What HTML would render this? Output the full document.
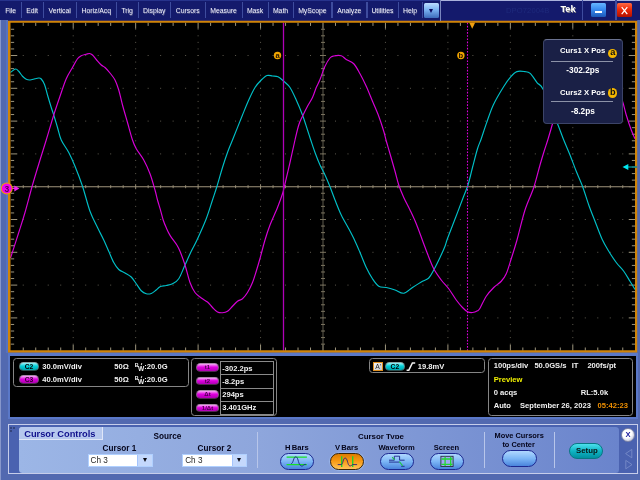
<!DOCTYPE html>
<html lang="en">
<head>
<meta charset="utf-8">
<title>Tek DPO72004B - Cursor Controls</title>
<style>
html,body{margin:0;padding:0;}
body{width:640px;height:480px;overflow:hidden;background:#5269b0;font-family:"Liberation Sans",sans-serif;position:relative;}
.abs{position:absolute;}
#menubar{left:0;top:0;width:640px;height:19.8px;background:#141a6c;}
#menubar .topl{left:0;top:0;width:441px;height:1px;background:#27338c;}
#menubar .topr{left:440.5px;top:0;width:200px;height:1px;background:#aab2dc;}
.mi{position:absolute;top:0;height:20px;line-height:21.2px;font-size:6.8px;color:#f4f4ff;text-align:center;white-space:nowrap;text-shadow:0.5px 0.5px 0 #555a8a;}
.msep{position:absolute;top:2px;width:1.4px;height:16px;background:#3e4c9e;}
.b{font-weight:bold;font-size:7.6px;color:#f2f2f2;white-space:nowrap;position:absolute;line-height:9px;}
.box{position:absolute;border:1px solid #858585;border-radius:3.5px;box-sizing:border-box;}
.badge{position:absolute;box-sizing:border-box;border-radius:4.5px;font-size:6.7px;font-weight:bold;color:#000;text-align:center;line-height:7.2px;border:0.6px solid #8c8c8c;}
.cy{background:linear-gradient(#9af4f8,#00d0d8 45%,#00a4ac);border-color:#88a4a4 #5a8080 #2a5050 #5a8080;}
.mg{background:linear-gradient(#f8aaf8,#e000e0 45%,#b000b4);color:#30002c;border-color:#a888a8 #805a80 #502a50 #805a80;}
.lbl{position:absolute;font-weight:bold;font-size:7.6px;color:#04041a;white-space:nowrap;line-height:9px;}
.pill{position:absolute;box-sizing:border-box;border-radius:8.5px;border:1.1px solid #1c2890;background:linear-gradient(#b0d8ff,#7cb6f6 50%,#4a84dc);}
.dd{position:absolute;box-sizing:border-box;height:13.6px;border:1px solid #b0d0ff;background:#fff;}
.dd .t{position:absolute;left:2px;top:1.4px;font-size:8.2px;line-height:10px;color:#262626;}
.dd .btn{position:absolute;right:0;top:0;width:13.2px;height:11.6px;background:#c4d8fc;border-left:1px solid #a4c4fc;}
.dd .btn:after{content:"";position:absolute;left:4.2px;top:3.6px;border-left:2.6px solid transparent;border-right:2.6px solid transparent;border-top:4.6px solid #0a0a14;}
.vsep{position:absolute;top:431.7px;width:1.3px;height:36.3px;background:#b8c6ea;}
</style>
</head>
<body>
<div id="wrap" style="position:absolute;left:0;top:0;width:640px;height:480px;will-change:transform;">
<svg id="plot" width="640" height="480" viewBox="0 0 640 480" style="position:absolute;left:0;top:0">
<rect x="9" y="21" width="627" height="331" fill="#000"/>
<g fill="#5c584d"><rect x="22.74" y="55.00" width="1" height="1"/><rect x="35.23" y="55.00" width="1" height="1"/><rect x="47.72" y="55.00" width="1" height="1"/><rect x="60.21" y="55.00" width="1" height="1"/><rect x="72.70" y="55.00" width="1" height="1"/><rect x="85.19" y="55.00" width="1" height="1"/><rect x="97.68" y="55.00" width="1" height="1"/><rect x="110.17" y="55.00" width="1" height="1"/><rect x="122.66" y="55.00" width="1" height="1"/><rect x="135.15" y="55.00" width="1" height="1"/><rect x="147.64" y="55.00" width="1" height="1"/><rect x="160.13" y="55.00" width="1" height="1"/><rect x="172.62" y="55.00" width="1" height="1"/><rect x="185.11" y="55.00" width="1" height="1"/><rect x="197.60" y="55.00" width="1" height="1"/><rect x="210.09" y="55.00" width="1" height="1"/><rect x="222.58" y="55.00" width="1" height="1"/><rect x="235.07" y="55.00" width="1" height="1"/><rect x="247.56" y="55.00" width="1" height="1"/><rect x="260.05" y="55.00" width="1" height="1"/><rect x="272.54" y="55.00" width="1" height="1"/><rect x="285.03" y="55.00" width="1" height="1"/><rect x="297.52" y="55.00" width="1" height="1"/><rect x="310.01" y="55.00" width="1" height="1"/><rect x="322.50" y="55.00" width="1" height="1"/><rect x="334.99" y="55.00" width="1" height="1"/><rect x="347.48" y="55.00" width="1" height="1"/><rect x="359.97" y="55.00" width="1" height="1"/><rect x="372.46" y="55.00" width="1" height="1"/><rect x="384.95" y="55.00" width="1" height="1"/><rect x="397.44" y="55.00" width="1" height="1"/><rect x="409.93" y="55.00" width="1" height="1"/><rect x="422.42" y="55.00" width="1" height="1"/><rect x="434.91" y="55.00" width="1" height="1"/><rect x="447.40" y="55.00" width="1" height="1"/><rect x="459.89" y="55.00" width="1" height="1"/><rect x="472.38" y="55.00" width="1" height="1"/><rect x="484.87" y="55.00" width="1" height="1"/><rect x="497.36" y="55.00" width="1" height="1"/><rect x="509.85" y="55.00" width="1" height="1"/><rect x="522.34" y="55.00" width="1" height="1"/><rect x="534.83" y="55.00" width="1" height="1"/><rect x="547.32" y="55.00" width="1" height="1"/><rect x="559.81" y="55.00" width="1" height="1"/><rect x="572.30" y="55.00" width="1" height="1"/><rect x="584.79" y="55.00" width="1" height="1"/><rect x="597.28" y="55.00" width="1" height="1"/><rect x="609.77" y="55.00" width="1" height="1"/><rect x="622.26" y="55.00" width="1" height="1"/><rect x="22.74" y="87.80" width="1" height="1"/><rect x="35.23" y="87.80" width="1" height="1"/><rect x="47.72" y="87.80" width="1" height="1"/><rect x="60.21" y="87.80" width="1" height="1"/><rect x="72.70" y="87.80" width="1" height="1"/><rect x="85.19" y="87.80" width="1" height="1"/><rect x="97.68" y="87.80" width="1" height="1"/><rect x="110.17" y="87.80" width="1" height="1"/><rect x="122.66" y="87.80" width="1" height="1"/><rect x="135.15" y="87.80" width="1" height="1"/><rect x="147.64" y="87.80" width="1" height="1"/><rect x="160.13" y="87.80" width="1" height="1"/><rect x="172.62" y="87.80" width="1" height="1"/><rect x="185.11" y="87.80" width="1" height="1"/><rect x="197.60" y="87.80" width="1" height="1"/><rect x="210.09" y="87.80" width="1" height="1"/><rect x="222.58" y="87.80" width="1" height="1"/><rect x="235.07" y="87.80" width="1" height="1"/><rect x="247.56" y="87.80" width="1" height="1"/><rect x="260.05" y="87.80" width="1" height="1"/><rect x="272.54" y="87.80" width="1" height="1"/><rect x="285.03" y="87.80" width="1" height="1"/><rect x="297.52" y="87.80" width="1" height="1"/><rect x="310.01" y="87.80" width="1" height="1"/><rect x="322.50" y="87.80" width="1" height="1"/><rect x="334.99" y="87.80" width="1" height="1"/><rect x="347.48" y="87.80" width="1" height="1"/><rect x="359.97" y="87.80" width="1" height="1"/><rect x="372.46" y="87.80" width="1" height="1"/><rect x="384.95" y="87.80" width="1" height="1"/><rect x="397.44" y="87.80" width="1" height="1"/><rect x="409.93" y="87.80" width="1" height="1"/><rect x="422.42" y="87.80" width="1" height="1"/><rect x="434.91" y="87.80" width="1" height="1"/><rect x="447.40" y="87.80" width="1" height="1"/><rect x="459.89" y="87.80" width="1" height="1"/><rect x="472.38" y="87.80" width="1" height="1"/><rect x="484.87" y="87.80" width="1" height="1"/><rect x="497.36" y="87.80" width="1" height="1"/><rect x="509.85" y="87.80" width="1" height="1"/><rect x="522.34" y="87.80" width="1" height="1"/><rect x="534.83" y="87.80" width="1" height="1"/><rect x="547.32" y="87.80" width="1" height="1"/><rect x="559.81" y="87.80" width="1" height="1"/><rect x="572.30" y="87.80" width="1" height="1"/><rect x="584.79" y="87.80" width="1" height="1"/><rect x="597.28" y="87.80" width="1" height="1"/><rect x="609.77" y="87.80" width="1" height="1"/><rect x="622.26" y="87.80" width="1" height="1"/><rect x="22.74" y="120.60" width="1" height="1"/><rect x="35.23" y="120.60" width="1" height="1"/><rect x="47.72" y="120.60" width="1" height="1"/><rect x="60.21" y="120.60" width="1" height="1"/><rect x="72.70" y="120.60" width="1" height="1"/><rect x="85.19" y="120.60" width="1" height="1"/><rect x="97.68" y="120.60" width="1" height="1"/><rect x="110.17" y="120.60" width="1" height="1"/><rect x="122.66" y="120.60" width="1" height="1"/><rect x="135.15" y="120.60" width="1" height="1"/><rect x="147.64" y="120.60" width="1" height="1"/><rect x="160.13" y="120.60" width="1" height="1"/><rect x="172.62" y="120.60" width="1" height="1"/><rect x="185.11" y="120.60" width="1" height="1"/><rect x="197.60" y="120.60" width="1" height="1"/><rect x="210.09" y="120.60" width="1" height="1"/><rect x="222.58" y="120.60" width="1" height="1"/><rect x="235.07" y="120.60" width="1" height="1"/><rect x="247.56" y="120.60" width="1" height="1"/><rect x="260.05" y="120.60" width="1" height="1"/><rect x="272.54" y="120.60" width="1" height="1"/><rect x="285.03" y="120.60" width="1" height="1"/><rect x="297.52" y="120.60" width="1" height="1"/><rect x="310.01" y="120.60" width="1" height="1"/><rect x="322.50" y="120.60" width="1" height="1"/><rect x="334.99" y="120.60" width="1" height="1"/><rect x="347.48" y="120.60" width="1" height="1"/><rect x="359.97" y="120.60" width="1" height="1"/><rect x="372.46" y="120.60" width="1" height="1"/><rect x="384.95" y="120.60" width="1" height="1"/><rect x="397.44" y="120.60" width="1" height="1"/><rect x="409.93" y="120.60" width="1" height="1"/><rect x="422.42" y="120.60" width="1" height="1"/><rect x="434.91" y="120.60" width="1" height="1"/><rect x="447.40" y="120.60" width="1" height="1"/><rect x="459.89" y="120.60" width="1" height="1"/><rect x="472.38" y="120.60" width="1" height="1"/><rect x="484.87" y="120.60" width="1" height="1"/><rect x="497.36" y="120.60" width="1" height="1"/><rect x="509.85" y="120.60" width="1" height="1"/><rect x="522.34" y="120.60" width="1" height="1"/><rect x="534.83" y="120.60" width="1" height="1"/><rect x="547.32" y="120.60" width="1" height="1"/><rect x="559.81" y="120.60" width="1" height="1"/><rect x="572.30" y="120.60" width="1" height="1"/><rect x="584.79" y="120.60" width="1" height="1"/><rect x="597.28" y="120.60" width="1" height="1"/><rect x="609.77" y="120.60" width="1" height="1"/><rect x="622.26" y="120.60" width="1" height="1"/><rect x="22.74" y="153.40" width="1" height="1"/><rect x="35.23" y="153.40" width="1" height="1"/><rect x="47.72" y="153.40" width="1" height="1"/><rect x="60.21" y="153.40" width="1" height="1"/><rect x="72.70" y="153.40" width="1" height="1"/><rect x="85.19" y="153.40" width="1" height="1"/><rect x="97.68" y="153.40" width="1" height="1"/><rect x="110.17" y="153.40" width="1" height="1"/><rect x="122.66" y="153.40" width="1" height="1"/><rect x="135.15" y="153.40" width="1" height="1"/><rect x="147.64" y="153.40" width="1" height="1"/><rect x="160.13" y="153.40" width="1" height="1"/><rect x="172.62" y="153.40" width="1" height="1"/><rect x="185.11" y="153.40" width="1" height="1"/><rect x="197.60" y="153.40" width="1" height="1"/><rect x="210.09" y="153.40" width="1" height="1"/><rect x="222.58" y="153.40" width="1" height="1"/><rect x="235.07" y="153.40" width="1" height="1"/><rect x="247.56" y="153.40" width="1" height="1"/><rect x="260.05" y="153.40" width="1" height="1"/><rect x="272.54" y="153.40" width="1" height="1"/><rect x="285.03" y="153.40" width="1" height="1"/><rect x="297.52" y="153.40" width="1" height="1"/><rect x="310.01" y="153.40" width="1" height="1"/><rect x="322.50" y="153.40" width="1" height="1"/><rect x="334.99" y="153.40" width="1" height="1"/><rect x="347.48" y="153.40" width="1" height="1"/><rect x="359.97" y="153.40" width="1" height="1"/><rect x="372.46" y="153.40" width="1" height="1"/><rect x="384.95" y="153.40" width="1" height="1"/><rect x="397.44" y="153.40" width="1" height="1"/><rect x="409.93" y="153.40" width="1" height="1"/><rect x="422.42" y="153.40" width="1" height="1"/><rect x="434.91" y="153.40" width="1" height="1"/><rect x="447.40" y="153.40" width="1" height="1"/><rect x="459.89" y="153.40" width="1" height="1"/><rect x="472.38" y="153.40" width="1" height="1"/><rect x="484.87" y="153.40" width="1" height="1"/><rect x="497.36" y="153.40" width="1" height="1"/><rect x="509.85" y="153.40" width="1" height="1"/><rect x="522.34" y="153.40" width="1" height="1"/><rect x="534.83" y="153.40" width="1" height="1"/><rect x="547.32" y="153.40" width="1" height="1"/><rect x="559.81" y="153.40" width="1" height="1"/><rect x="572.30" y="153.40" width="1" height="1"/><rect x="584.79" y="153.40" width="1" height="1"/><rect x="597.28" y="153.40" width="1" height="1"/><rect x="609.77" y="153.40" width="1" height="1"/><rect x="622.26" y="153.40" width="1" height="1"/><rect x="22.74" y="219.00" width="1" height="1"/><rect x="35.23" y="219.00" width="1" height="1"/><rect x="47.72" y="219.00" width="1" height="1"/><rect x="60.21" y="219.00" width="1" height="1"/><rect x="72.70" y="219.00" width="1" height="1"/><rect x="85.19" y="219.00" width="1" height="1"/><rect x="97.68" y="219.00" width="1" height="1"/><rect x="110.17" y="219.00" width="1" height="1"/><rect x="122.66" y="219.00" width="1" height="1"/><rect x="135.15" y="219.00" width="1" height="1"/><rect x="147.64" y="219.00" width="1" height="1"/><rect x="160.13" y="219.00" width="1" height="1"/><rect x="172.62" y="219.00" width="1" height="1"/><rect x="185.11" y="219.00" width="1" height="1"/><rect x="197.60" y="219.00" width="1" height="1"/><rect x="210.09" y="219.00" width="1" height="1"/><rect x="222.58" y="219.00" width="1" height="1"/><rect x="235.07" y="219.00" width="1" height="1"/><rect x="247.56" y="219.00" width="1" height="1"/><rect x="260.05" y="219.00" width="1" height="1"/><rect x="272.54" y="219.00" width="1" height="1"/><rect x="285.03" y="219.00" width="1" height="1"/><rect x="297.52" y="219.00" width="1" height="1"/><rect x="310.01" y="219.00" width="1" height="1"/><rect x="322.50" y="219.00" width="1" height="1"/><rect x="334.99" y="219.00" width="1" height="1"/><rect x="347.48" y="219.00" width="1" height="1"/><rect x="359.97" y="219.00" width="1" height="1"/><rect x="372.46" y="219.00" width="1" height="1"/><rect x="384.95" y="219.00" width="1" height="1"/><rect x="397.44" y="219.00" width="1" height="1"/><rect x="409.93" y="219.00" width="1" height="1"/><rect x="422.42" y="219.00" width="1" height="1"/><rect x="434.91" y="219.00" width="1" height="1"/><rect x="447.40" y="219.00" width="1" height="1"/><rect x="459.89" y="219.00" width="1" height="1"/><rect x="472.38" y="219.00" width="1" height="1"/><rect x="484.87" y="219.00" width="1" height="1"/><rect x="497.36" y="219.00" width="1" height="1"/><rect x="509.85" y="219.00" width="1" height="1"/><rect x="522.34" y="219.00" width="1" height="1"/><rect x="534.83" y="219.00" width="1" height="1"/><rect x="547.32" y="219.00" width="1" height="1"/><rect x="559.81" y="219.00" width="1" height="1"/><rect x="572.30" y="219.00" width="1" height="1"/><rect x="584.79" y="219.00" width="1" height="1"/><rect x="597.28" y="219.00" width="1" height="1"/><rect x="609.77" y="219.00" width="1" height="1"/><rect x="622.26" y="219.00" width="1" height="1"/><rect x="22.74" y="251.80" width="1" height="1"/><rect x="35.23" y="251.80" width="1" height="1"/><rect x="47.72" y="251.80" width="1" height="1"/><rect x="60.21" y="251.80" width="1" height="1"/><rect x="72.70" y="251.80" width="1" height="1"/><rect x="85.19" y="251.80" width="1" height="1"/><rect x="97.68" y="251.80" width="1" height="1"/><rect x="110.17" y="251.80" width="1" height="1"/><rect x="122.66" y="251.80" width="1" height="1"/><rect x="135.15" y="251.80" width="1" height="1"/><rect x="147.64" y="251.80" width="1" height="1"/><rect x="160.13" y="251.80" width="1" height="1"/><rect x="172.62" y="251.80" width="1" height="1"/><rect x="185.11" y="251.80" width="1" height="1"/><rect x="197.60" y="251.80" width="1" height="1"/><rect x="210.09" y="251.80" width="1" height="1"/><rect x="222.58" y="251.80" width="1" height="1"/><rect x="235.07" y="251.80" width="1" height="1"/><rect x="247.56" y="251.80" width="1" height="1"/><rect x="260.05" y="251.80" width="1" height="1"/><rect x="272.54" y="251.80" width="1" height="1"/><rect x="285.03" y="251.80" width="1" height="1"/><rect x="297.52" y="251.80" width="1" height="1"/><rect x="310.01" y="251.80" width="1" height="1"/><rect x="322.50" y="251.80" width="1" height="1"/><rect x="334.99" y="251.80" width="1" height="1"/><rect x="347.48" y="251.80" width="1" height="1"/><rect x="359.97" y="251.80" width="1" height="1"/><rect x="372.46" y="251.80" width="1" height="1"/><rect x="384.95" y="251.80" width="1" height="1"/><rect x="397.44" y="251.80" width="1" height="1"/><rect x="409.93" y="251.80" width="1" height="1"/><rect x="422.42" y="251.80" width="1" height="1"/><rect x="434.91" y="251.80" width="1" height="1"/><rect x="447.40" y="251.80" width="1" height="1"/><rect x="459.89" y="251.80" width="1" height="1"/><rect x="472.38" y="251.80" width="1" height="1"/><rect x="484.87" y="251.80" width="1" height="1"/><rect x="497.36" y="251.80" width="1" height="1"/><rect x="509.85" y="251.80" width="1" height="1"/><rect x="522.34" y="251.80" width="1" height="1"/><rect x="534.83" y="251.80" width="1" height="1"/><rect x="547.32" y="251.80" width="1" height="1"/><rect x="559.81" y="251.80" width="1" height="1"/><rect x="572.30" y="251.80" width="1" height="1"/><rect x="584.79" y="251.80" width="1" height="1"/><rect x="597.28" y="251.80" width="1" height="1"/><rect x="609.77" y="251.80" width="1" height="1"/><rect x="622.26" y="251.80" width="1" height="1"/><rect x="22.74" y="284.60" width="1" height="1"/><rect x="35.23" y="284.60" width="1" height="1"/><rect x="47.72" y="284.60" width="1" height="1"/><rect x="60.21" y="284.60" width="1" height="1"/><rect x="72.70" y="284.60" width="1" height="1"/><rect x="85.19" y="284.60" width="1" height="1"/><rect x="97.68" y="284.60" width="1" height="1"/><rect x="110.17" y="284.60" width="1" height="1"/><rect x="122.66" y="284.60" width="1" height="1"/><rect x="135.15" y="284.60" width="1" height="1"/><rect x="147.64" y="284.60" width="1" height="1"/><rect x="160.13" y="284.60" width="1" height="1"/><rect x="172.62" y="284.60" width="1" height="1"/><rect x="185.11" y="284.60" width="1" height="1"/><rect x="197.60" y="284.60" width="1" height="1"/><rect x="210.09" y="284.60" width="1" height="1"/><rect x="222.58" y="284.60" width="1" height="1"/><rect x="235.07" y="284.60" width="1" height="1"/><rect x="247.56" y="284.60" width="1" height="1"/><rect x="260.05" y="284.60" width="1" height="1"/><rect x="272.54" y="284.60" width="1" height="1"/><rect x="285.03" y="284.60" width="1" height="1"/><rect x="297.52" y="284.60" width="1" height="1"/><rect x="310.01" y="284.60" width="1" height="1"/><rect x="322.50" y="284.60" width="1" height="1"/><rect x="334.99" y="284.60" width="1" height="1"/><rect x="347.48" y="284.60" width="1" height="1"/><rect x="359.97" y="284.60" width="1" height="1"/><rect x="372.46" y="284.60" width="1" height="1"/><rect x="384.95" y="284.60" width="1" height="1"/><rect x="397.44" y="284.60" width="1" height="1"/><rect x="409.93" y="284.60" width="1" height="1"/><rect x="422.42" y="284.60" width="1" height="1"/><rect x="434.91" y="284.60" width="1" height="1"/><rect x="447.40" y="284.60" width="1" height="1"/><rect x="459.89" y="284.60" width="1" height="1"/><rect x="472.38" y="284.60" width="1" height="1"/><rect x="484.87" y="284.60" width="1" height="1"/><rect x="497.36" y="284.60" width="1" height="1"/><rect x="509.85" y="284.60" width="1" height="1"/><rect x="522.34" y="284.60" width="1" height="1"/><rect x="534.83" y="284.60" width="1" height="1"/><rect x="547.32" y="284.60" width="1" height="1"/><rect x="559.81" y="284.60" width="1" height="1"/><rect x="572.30" y="284.60" width="1" height="1"/><rect x="584.79" y="284.60" width="1" height="1"/><rect x="597.28" y="284.60" width="1" height="1"/><rect x="609.77" y="284.60" width="1" height="1"/><rect x="622.26" y="284.60" width="1" height="1"/><rect x="22.74" y="317.40" width="1" height="1"/><rect x="35.23" y="317.40" width="1" height="1"/><rect x="47.72" y="317.40" width="1" height="1"/><rect x="60.21" y="317.40" width="1" height="1"/><rect x="72.70" y="317.40" width="1" height="1"/><rect x="85.19" y="317.40" width="1" height="1"/><rect x="97.68" y="317.40" width="1" height="1"/><rect x="110.17" y="317.40" width="1" height="1"/><rect x="122.66" y="317.40" width="1" height="1"/><rect x="135.15" y="317.40" width="1" height="1"/><rect x="147.64" y="317.40" width="1" height="1"/><rect x="160.13" y="317.40" width="1" height="1"/><rect x="172.62" y="317.40" width="1" height="1"/><rect x="185.11" y="317.40" width="1" height="1"/><rect x="197.60" y="317.40" width="1" height="1"/><rect x="210.09" y="317.40" width="1" height="1"/><rect x="222.58" y="317.40" width="1" height="1"/><rect x="235.07" y="317.40" width="1" height="1"/><rect x="247.56" y="317.40" width="1" height="1"/><rect x="260.05" y="317.40" width="1" height="1"/><rect x="272.54" y="317.40" width="1" height="1"/><rect x="285.03" y="317.40" width="1" height="1"/><rect x="297.52" y="317.40" width="1" height="1"/><rect x="310.01" y="317.40" width="1" height="1"/><rect x="322.50" y="317.40" width="1" height="1"/><rect x="334.99" y="317.40" width="1" height="1"/><rect x="347.48" y="317.40" width="1" height="1"/><rect x="359.97" y="317.40" width="1" height="1"/><rect x="372.46" y="317.40" width="1" height="1"/><rect x="384.95" y="317.40" width="1" height="1"/><rect x="397.44" y="317.40" width="1" height="1"/><rect x="409.93" y="317.40" width="1" height="1"/><rect x="422.42" y="317.40" width="1" height="1"/><rect x="434.91" y="317.40" width="1" height="1"/><rect x="447.40" y="317.40" width="1" height="1"/><rect x="459.89" y="317.40" width="1" height="1"/><rect x="472.38" y="317.40" width="1" height="1"/><rect x="484.87" y="317.40" width="1" height="1"/><rect x="497.36" y="317.40" width="1" height="1"/><rect x="509.85" y="317.40" width="1" height="1"/><rect x="522.34" y="317.40" width="1" height="1"/><rect x="534.83" y="317.40" width="1" height="1"/><rect x="547.32" y="317.40" width="1" height="1"/><rect x="559.81" y="317.40" width="1" height="1"/><rect x="572.30" y="317.40" width="1" height="1"/><rect x="584.79" y="317.40" width="1" height="1"/><rect x="597.28" y="317.40" width="1" height="1"/><rect x="609.77" y="317.40" width="1" height="1"/><rect x="622.26" y="317.40" width="1" height="1"/><rect x="72.70" y="28.76" width="1" height="1"/><rect x="72.70" y="35.32" width="1" height="1"/><rect x="72.70" y="41.88" width="1" height="1"/><rect x="72.70" y="48.44" width="1" height="1"/><rect x="72.70" y="55.00" width="1" height="1"/><rect x="72.70" y="61.56" width="1" height="1"/><rect x="72.70" y="68.12" width="1" height="1"/><rect x="72.70" y="74.68" width="1" height="1"/><rect x="72.70" y="81.24" width="1" height="1"/><rect x="72.70" y="87.80" width="1" height="1"/><rect x="72.70" y="94.36" width="1" height="1"/><rect x="72.70" y="100.92" width="1" height="1"/><rect x="72.70" y="107.48" width="1" height="1"/><rect x="72.70" y="114.04" width="1" height="1"/><rect x="72.70" y="120.60" width="1" height="1"/><rect x="72.70" y="127.16" width="1" height="1"/><rect x="72.70" y="133.72" width="1" height="1"/><rect x="72.70" y="140.28" width="1" height="1"/><rect x="72.70" y="146.84" width="1" height="1"/><rect x="72.70" y="153.40" width="1" height="1"/><rect x="72.70" y="159.96" width="1" height="1"/><rect x="72.70" y="166.52" width="1" height="1"/><rect x="72.70" y="173.08" width="1" height="1"/><rect x="72.70" y="179.64" width="1" height="1"/><rect x="72.70" y="186.20" width="1" height="1"/><rect x="72.70" y="192.76" width="1" height="1"/><rect x="72.70" y="199.32" width="1" height="1"/><rect x="72.70" y="205.88" width="1" height="1"/><rect x="72.70" y="212.44" width="1" height="1"/><rect x="72.70" y="219.00" width="1" height="1"/><rect x="72.70" y="225.56" width="1" height="1"/><rect x="72.70" y="232.12" width="1" height="1"/><rect x="72.70" y="238.68" width="1" height="1"/><rect x="72.70" y="245.24" width="1" height="1"/><rect x="72.70" y="251.80" width="1" height="1"/><rect x="72.70" y="258.36" width="1" height="1"/><rect x="72.70" y="264.92" width="1" height="1"/><rect x="72.70" y="271.48" width="1" height="1"/><rect x="72.70" y="278.04" width="1" height="1"/><rect x="72.70" y="284.60" width="1" height="1"/><rect x="72.70" y="291.16" width="1" height="1"/><rect x="72.70" y="297.72" width="1" height="1"/><rect x="72.70" y="304.28" width="1" height="1"/><rect x="72.70" y="310.84" width="1" height="1"/><rect x="72.70" y="317.40" width="1" height="1"/><rect x="72.70" y="323.96" width="1" height="1"/><rect x="72.70" y="330.52" width="1" height="1"/><rect x="72.70" y="337.08" width="1" height="1"/><rect x="72.70" y="343.64" width="1" height="1"/><rect x="135.15" y="28.76" width="1" height="1"/><rect x="135.15" y="35.32" width="1" height="1"/><rect x="135.15" y="41.88" width="1" height="1"/><rect x="135.15" y="48.44" width="1" height="1"/><rect x="135.15" y="55.00" width="1" height="1"/><rect x="135.15" y="61.56" width="1" height="1"/><rect x="135.15" y="68.12" width="1" height="1"/><rect x="135.15" y="74.68" width="1" height="1"/><rect x="135.15" y="81.24" width="1" height="1"/><rect x="135.15" y="87.80" width="1" height="1"/><rect x="135.15" y="94.36" width="1" height="1"/><rect x="135.15" y="100.92" width="1" height="1"/><rect x="135.15" y="107.48" width="1" height="1"/><rect x="135.15" y="114.04" width="1" height="1"/><rect x="135.15" y="120.60" width="1" height="1"/><rect x="135.15" y="127.16" width="1" height="1"/><rect x="135.15" y="133.72" width="1" height="1"/><rect x="135.15" y="140.28" width="1" height="1"/><rect x="135.15" y="146.84" width="1" height="1"/><rect x="135.15" y="153.40" width="1" height="1"/><rect x="135.15" y="159.96" width="1" height="1"/><rect x="135.15" y="166.52" width="1" height="1"/><rect x="135.15" y="173.08" width="1" height="1"/><rect x="135.15" y="179.64" width="1" height="1"/><rect x="135.15" y="186.20" width="1" height="1"/><rect x="135.15" y="192.76" width="1" height="1"/><rect x="135.15" y="199.32" width="1" height="1"/><rect x="135.15" y="205.88" width="1" height="1"/><rect x="135.15" y="212.44" width="1" height="1"/><rect x="135.15" y="219.00" width="1" height="1"/><rect x="135.15" y="225.56" width="1" height="1"/><rect x="135.15" y="232.12" width="1" height="1"/><rect x="135.15" y="238.68" width="1" height="1"/><rect x="135.15" y="245.24" width="1" height="1"/><rect x="135.15" y="251.80" width="1" height="1"/><rect x="135.15" y="258.36" width="1" height="1"/><rect x="135.15" y="264.92" width="1" height="1"/><rect x="135.15" y="271.48" width="1" height="1"/><rect x="135.15" y="278.04" width="1" height="1"/><rect x="135.15" y="284.60" width="1" height="1"/><rect x="135.15" y="291.16" width="1" height="1"/><rect x="135.15" y="297.72" width="1" height="1"/><rect x="135.15" y="304.28" width="1" height="1"/><rect x="135.15" y="310.84" width="1" height="1"/><rect x="135.15" y="317.40" width="1" height="1"/><rect x="135.15" y="323.96" width="1" height="1"/><rect x="135.15" y="330.52" width="1" height="1"/><rect x="135.15" y="337.08" width="1" height="1"/><rect x="135.15" y="343.64" width="1" height="1"/><rect x="197.60" y="28.76" width="1" height="1"/><rect x="197.60" y="35.32" width="1" height="1"/><rect x="197.60" y="41.88" width="1" height="1"/><rect x="197.60" y="48.44" width="1" height="1"/><rect x="197.60" y="55.00" width="1" height="1"/><rect x="197.60" y="61.56" width="1" height="1"/><rect x="197.60" y="68.12" width="1" height="1"/><rect x="197.60" y="74.68" width="1" height="1"/><rect x="197.60" y="81.24" width="1" height="1"/><rect x="197.60" y="87.80" width="1" height="1"/><rect x="197.60" y="94.36" width="1" height="1"/><rect x="197.60" y="100.92" width="1" height="1"/><rect x="197.60" y="107.48" width="1" height="1"/><rect x="197.60" y="114.04" width="1" height="1"/><rect x="197.60" y="120.60" width="1" height="1"/><rect x="197.60" y="127.16" width="1" height="1"/><rect x="197.60" y="133.72" width="1" height="1"/><rect x="197.60" y="140.28" width="1" height="1"/><rect x="197.60" y="146.84" width="1" height="1"/><rect x="197.60" y="153.40" width="1" height="1"/><rect x="197.60" y="159.96" width="1" height="1"/><rect x="197.60" y="166.52" width="1" height="1"/><rect x="197.60" y="173.08" width="1" height="1"/><rect x="197.60" y="179.64" width="1" height="1"/><rect x="197.60" y="186.20" width="1" height="1"/><rect x="197.60" y="192.76" width="1" height="1"/><rect x="197.60" y="199.32" width="1" height="1"/><rect x="197.60" y="205.88" width="1" height="1"/><rect x="197.60" y="212.44" width="1" height="1"/><rect x="197.60" y="219.00" width="1" height="1"/><rect x="197.60" y="225.56" width="1" height="1"/><rect x="197.60" y="232.12" width="1" height="1"/><rect x="197.60" y="238.68" width="1" height="1"/><rect x="197.60" y="245.24" width="1" height="1"/><rect x="197.60" y="251.80" width="1" height="1"/><rect x="197.60" y="258.36" width="1" height="1"/><rect x="197.60" y="264.92" width="1" height="1"/><rect x="197.60" y="271.48" width="1" height="1"/><rect x="197.60" y="278.04" width="1" height="1"/><rect x="197.60" y="284.60" width="1" height="1"/><rect x="197.60" y="291.16" width="1" height="1"/><rect x="197.60" y="297.72" width="1" height="1"/><rect x="197.60" y="304.28" width="1" height="1"/><rect x="197.60" y="310.84" width="1" height="1"/><rect x="197.60" y="317.40" width="1" height="1"/><rect x="197.60" y="323.96" width="1" height="1"/><rect x="197.60" y="330.52" width="1" height="1"/><rect x="197.60" y="337.08" width="1" height="1"/><rect x="197.60" y="343.64" width="1" height="1"/><rect x="260.05" y="28.76" width="1" height="1"/><rect x="260.05" y="35.32" width="1" height="1"/><rect x="260.05" y="41.88" width="1" height="1"/><rect x="260.05" y="48.44" width="1" height="1"/><rect x="260.05" y="55.00" width="1" height="1"/><rect x="260.05" y="61.56" width="1" height="1"/><rect x="260.05" y="68.12" width="1" height="1"/><rect x="260.05" y="74.68" width="1" height="1"/><rect x="260.05" y="81.24" width="1" height="1"/><rect x="260.05" y="87.80" width="1" height="1"/><rect x="260.05" y="94.36" width="1" height="1"/><rect x="260.05" y="100.92" width="1" height="1"/><rect x="260.05" y="107.48" width="1" height="1"/><rect x="260.05" y="114.04" width="1" height="1"/><rect x="260.05" y="120.60" width="1" height="1"/><rect x="260.05" y="127.16" width="1" height="1"/><rect x="260.05" y="133.72" width="1" height="1"/><rect x="260.05" y="140.28" width="1" height="1"/><rect x="260.05" y="146.84" width="1" height="1"/><rect x="260.05" y="153.40" width="1" height="1"/><rect x="260.05" y="159.96" width="1" height="1"/><rect x="260.05" y="166.52" width="1" height="1"/><rect x="260.05" y="173.08" width="1" height="1"/><rect x="260.05" y="179.64" width="1" height="1"/><rect x="260.05" y="186.20" width="1" height="1"/><rect x="260.05" y="192.76" width="1" height="1"/><rect x="260.05" y="199.32" width="1" height="1"/><rect x="260.05" y="205.88" width="1" height="1"/><rect x="260.05" y="212.44" width="1" height="1"/><rect x="260.05" y="219.00" width="1" height="1"/><rect x="260.05" y="225.56" width="1" height="1"/><rect x="260.05" y="232.12" width="1" height="1"/><rect x="260.05" y="238.68" width="1" height="1"/><rect x="260.05" y="245.24" width="1" height="1"/><rect x="260.05" y="251.80" width="1" height="1"/><rect x="260.05" y="258.36" width="1" height="1"/><rect x="260.05" y="264.92" width="1" height="1"/><rect x="260.05" y="271.48" width="1" height="1"/><rect x="260.05" y="278.04" width="1" height="1"/><rect x="260.05" y="284.60" width="1" height="1"/><rect x="260.05" y="291.16" width="1" height="1"/><rect x="260.05" y="297.72" width="1" height="1"/><rect x="260.05" y="304.28" width="1" height="1"/><rect x="260.05" y="310.84" width="1" height="1"/><rect x="260.05" y="317.40" width="1" height="1"/><rect x="260.05" y="323.96" width="1" height="1"/><rect x="260.05" y="330.52" width="1" height="1"/><rect x="260.05" y="337.08" width="1" height="1"/><rect x="260.05" y="343.64" width="1" height="1"/><rect x="384.95" y="28.76" width="1" height="1"/><rect x="384.95" y="35.32" width="1" height="1"/><rect x="384.95" y="41.88" width="1" height="1"/><rect x="384.95" y="48.44" width="1" height="1"/><rect x="384.95" y="55.00" width="1" height="1"/><rect x="384.95" y="61.56" width="1" height="1"/><rect x="384.95" y="68.12" width="1" height="1"/><rect x="384.95" y="74.68" width="1" height="1"/><rect x="384.95" y="81.24" width="1" height="1"/><rect x="384.95" y="87.80" width="1" height="1"/><rect x="384.95" y="94.36" width="1" height="1"/><rect x="384.95" y="100.92" width="1" height="1"/><rect x="384.95" y="107.48" width="1" height="1"/><rect x="384.95" y="114.04" width="1" height="1"/><rect x="384.95" y="120.60" width="1" height="1"/><rect x="384.95" y="127.16" width="1" height="1"/><rect x="384.95" y="133.72" width="1" height="1"/><rect x="384.95" y="140.28" width="1" height="1"/><rect x="384.95" y="146.84" width="1" height="1"/><rect x="384.95" y="153.40" width="1" height="1"/><rect x="384.95" y="159.96" width="1" height="1"/><rect x="384.95" y="166.52" width="1" height="1"/><rect x="384.95" y="173.08" width="1" height="1"/><rect x="384.95" y="179.64" width="1" height="1"/><rect x="384.95" y="186.20" width="1" height="1"/><rect x="384.95" y="192.76" width="1" height="1"/><rect x="384.95" y="199.32" width="1" height="1"/><rect x="384.95" y="205.88" width="1" height="1"/><rect x="384.95" y="212.44" width="1" height="1"/><rect x="384.95" y="219.00" width="1" height="1"/><rect x="384.95" y="225.56" width="1" height="1"/><rect x="384.95" y="232.12" width="1" height="1"/><rect x="384.95" y="238.68" width="1" height="1"/><rect x="384.95" y="245.24" width="1" height="1"/><rect x="384.95" y="251.80" width="1" height="1"/><rect x="384.95" y="258.36" width="1" height="1"/><rect x="384.95" y="264.92" width="1" height="1"/><rect x="384.95" y="271.48" width="1" height="1"/><rect x="384.95" y="278.04" width="1" height="1"/><rect x="384.95" y="284.60" width="1" height="1"/><rect x="384.95" y="291.16" width="1" height="1"/><rect x="384.95" y="297.72" width="1" height="1"/><rect x="384.95" y="304.28" width="1" height="1"/><rect x="384.95" y="310.84" width="1" height="1"/><rect x="384.95" y="317.40" width="1" height="1"/><rect x="384.95" y="323.96" width="1" height="1"/><rect x="384.95" y="330.52" width="1" height="1"/><rect x="384.95" y="337.08" width="1" height="1"/><rect x="384.95" y="343.64" width="1" height="1"/><rect x="447.40" y="28.76" width="1" height="1"/><rect x="447.40" y="35.32" width="1" height="1"/><rect x="447.40" y="41.88" width="1" height="1"/><rect x="447.40" y="48.44" width="1" height="1"/><rect x="447.40" y="55.00" width="1" height="1"/><rect x="447.40" y="61.56" width="1" height="1"/><rect x="447.40" y="68.12" width="1" height="1"/><rect x="447.40" y="74.68" width="1" height="1"/><rect x="447.40" y="81.24" width="1" height="1"/><rect x="447.40" y="87.80" width="1" height="1"/><rect x="447.40" y="94.36" width="1" height="1"/><rect x="447.40" y="100.92" width="1" height="1"/><rect x="447.40" y="107.48" width="1" height="1"/><rect x="447.40" y="114.04" width="1" height="1"/><rect x="447.40" y="120.60" width="1" height="1"/><rect x="447.40" y="127.16" width="1" height="1"/><rect x="447.40" y="133.72" width="1" height="1"/><rect x="447.40" y="140.28" width="1" height="1"/><rect x="447.40" y="146.84" width="1" height="1"/><rect x="447.40" y="153.40" width="1" height="1"/><rect x="447.40" y="159.96" width="1" height="1"/><rect x="447.40" y="166.52" width="1" height="1"/><rect x="447.40" y="173.08" width="1" height="1"/><rect x="447.40" y="179.64" width="1" height="1"/><rect x="447.40" y="186.20" width="1" height="1"/><rect x="447.40" y="192.76" width="1" height="1"/><rect x="447.40" y="199.32" width="1" height="1"/><rect x="447.40" y="205.88" width="1" height="1"/><rect x="447.40" y="212.44" width="1" height="1"/><rect x="447.40" y="219.00" width="1" height="1"/><rect x="447.40" y="225.56" width="1" height="1"/><rect x="447.40" y="232.12" width="1" height="1"/><rect x="447.40" y="238.68" width="1" height="1"/><rect x="447.40" y="245.24" width="1" height="1"/><rect x="447.40" y="251.80" width="1" height="1"/><rect x="447.40" y="258.36" width="1" height="1"/><rect x="447.40" y="264.92" width="1" height="1"/><rect x="447.40" y="271.48" width="1" height="1"/><rect x="447.40" y="278.04" width="1" height="1"/><rect x="447.40" y="284.60" width="1" height="1"/><rect x="447.40" y="291.16" width="1" height="1"/><rect x="447.40" y="297.72" width="1" height="1"/><rect x="447.40" y="304.28" width="1" height="1"/><rect x="447.40" y="310.84" width="1" height="1"/><rect x="447.40" y="317.40" width="1" height="1"/><rect x="447.40" y="323.96" width="1" height="1"/><rect x="447.40" y="330.52" width="1" height="1"/><rect x="447.40" y="337.08" width="1" height="1"/><rect x="447.40" y="343.64" width="1" height="1"/><rect x="509.85" y="28.76" width="1" height="1"/><rect x="509.85" y="35.32" width="1" height="1"/><rect x="509.85" y="41.88" width="1" height="1"/><rect x="509.85" y="48.44" width="1" height="1"/><rect x="509.85" y="55.00" width="1" height="1"/><rect x="509.85" y="61.56" width="1" height="1"/><rect x="509.85" y="68.12" width="1" height="1"/><rect x="509.85" y="74.68" width="1" height="1"/><rect x="509.85" y="81.24" width="1" height="1"/><rect x="509.85" y="87.80" width="1" height="1"/><rect x="509.85" y="94.36" width="1" height="1"/><rect x="509.85" y="100.92" width="1" height="1"/><rect x="509.85" y="107.48" width="1" height="1"/><rect x="509.85" y="114.04" width="1" height="1"/><rect x="509.85" y="120.60" width="1" height="1"/><rect x="509.85" y="127.16" width="1" height="1"/><rect x="509.85" y="133.72" width="1" height="1"/><rect x="509.85" y="140.28" width="1" height="1"/><rect x="509.85" y="146.84" width="1" height="1"/><rect x="509.85" y="153.40" width="1" height="1"/><rect x="509.85" y="159.96" width="1" height="1"/><rect x="509.85" y="166.52" width="1" height="1"/><rect x="509.85" y="173.08" width="1" height="1"/><rect x="509.85" y="179.64" width="1" height="1"/><rect x="509.85" y="186.20" width="1" height="1"/><rect x="509.85" y="192.76" width="1" height="1"/><rect x="509.85" y="199.32" width="1" height="1"/><rect x="509.85" y="205.88" width="1" height="1"/><rect x="509.85" y="212.44" width="1" height="1"/><rect x="509.85" y="219.00" width="1" height="1"/><rect x="509.85" y="225.56" width="1" height="1"/><rect x="509.85" y="232.12" width="1" height="1"/><rect x="509.85" y="238.68" width="1" height="1"/><rect x="509.85" y="245.24" width="1" height="1"/><rect x="509.85" y="251.80" width="1" height="1"/><rect x="509.85" y="258.36" width="1" height="1"/><rect x="509.85" y="264.92" width="1" height="1"/><rect x="509.85" y="271.48" width="1" height="1"/><rect x="509.85" y="278.04" width="1" height="1"/><rect x="509.85" y="284.60" width="1" height="1"/><rect x="509.85" y="291.16" width="1" height="1"/><rect x="509.85" y="297.72" width="1" height="1"/><rect x="509.85" y="304.28" width="1" height="1"/><rect x="509.85" y="310.84" width="1" height="1"/><rect x="509.85" y="317.40" width="1" height="1"/><rect x="509.85" y="323.96" width="1" height="1"/><rect x="509.85" y="330.52" width="1" height="1"/><rect x="509.85" y="337.08" width="1" height="1"/><rect x="509.85" y="343.64" width="1" height="1"/><rect x="572.30" y="28.76" width="1" height="1"/><rect x="572.30" y="35.32" width="1" height="1"/><rect x="572.30" y="41.88" width="1" height="1"/><rect x="572.30" y="48.44" width="1" height="1"/><rect x="572.30" y="55.00" width="1" height="1"/><rect x="572.30" y="61.56" width="1" height="1"/><rect x="572.30" y="68.12" width="1" height="1"/><rect x="572.30" y="74.68" width="1" height="1"/><rect x="572.30" y="81.24" width="1" height="1"/><rect x="572.30" y="87.80" width="1" height="1"/><rect x="572.30" y="94.36" width="1" height="1"/><rect x="572.30" y="100.92" width="1" height="1"/><rect x="572.30" y="107.48" width="1" height="1"/><rect x="572.30" y="114.04" width="1" height="1"/><rect x="572.30" y="120.60" width="1" height="1"/><rect x="572.30" y="127.16" width="1" height="1"/><rect x="572.30" y="133.72" width="1" height="1"/><rect x="572.30" y="140.28" width="1" height="1"/><rect x="572.30" y="146.84" width="1" height="1"/><rect x="572.30" y="153.40" width="1" height="1"/><rect x="572.30" y="159.96" width="1" height="1"/><rect x="572.30" y="166.52" width="1" height="1"/><rect x="572.30" y="173.08" width="1" height="1"/><rect x="572.30" y="179.64" width="1" height="1"/><rect x="572.30" y="186.20" width="1" height="1"/><rect x="572.30" y="192.76" width="1" height="1"/><rect x="572.30" y="199.32" width="1" height="1"/><rect x="572.30" y="205.88" width="1" height="1"/><rect x="572.30" y="212.44" width="1" height="1"/><rect x="572.30" y="219.00" width="1" height="1"/><rect x="572.30" y="225.56" width="1" height="1"/><rect x="572.30" y="232.12" width="1" height="1"/><rect x="572.30" y="238.68" width="1" height="1"/><rect x="572.30" y="245.24" width="1" height="1"/><rect x="572.30" y="251.80" width="1" height="1"/><rect x="572.30" y="258.36" width="1" height="1"/><rect x="572.30" y="264.92" width="1" height="1"/><rect x="572.30" y="271.48" width="1" height="1"/><rect x="572.30" y="278.04" width="1" height="1"/><rect x="572.30" y="284.60" width="1" height="1"/><rect x="572.30" y="291.16" width="1" height="1"/><rect x="572.30" y="297.72" width="1" height="1"/><rect x="572.30" y="304.28" width="1" height="1"/><rect x="572.30" y="310.84" width="1" height="1"/><rect x="572.30" y="317.40" width="1" height="1"/><rect x="572.30" y="323.96" width="1" height="1"/><rect x="572.30" y="330.52" width="1" height="1"/><rect x="572.30" y="337.08" width="1" height="1"/><rect x="572.30" y="343.64" width="1" height="1"/></g>
<g fill="#9c947c"><rect x="22.74" y="22.70" width="1" height="3.20"/><rect x="22.74" y="347.50" width="1" height="3.20"/><rect x="35.23" y="22.70" width="1" height="3.20"/><rect x="35.23" y="347.50" width="1" height="3.20"/><rect x="47.72" y="22.70" width="1" height="3.20"/><rect x="47.72" y="347.50" width="1" height="3.20"/><rect x="60.21" y="22.70" width="1" height="3.20"/><rect x="60.21" y="347.50" width="1" height="3.20"/><rect x="72.70" y="22.70" width="1" height="6.00"/><rect x="72.70" y="344.70" width="1" height="6.00"/><rect x="85.19" y="22.70" width="1" height="3.20"/><rect x="85.19" y="347.50" width="1" height="3.20"/><rect x="97.68" y="22.70" width="1" height="3.20"/><rect x="97.68" y="347.50" width="1" height="3.20"/><rect x="110.17" y="22.70" width="1" height="3.20"/><rect x="110.17" y="347.50" width="1" height="3.20"/><rect x="122.66" y="22.70" width="1" height="3.20"/><rect x="122.66" y="347.50" width="1" height="3.20"/><rect x="135.15" y="22.70" width="1" height="6.00"/><rect x="135.15" y="344.70" width="1" height="6.00"/><rect x="147.64" y="22.70" width="1" height="3.20"/><rect x="147.64" y="347.50" width="1" height="3.20"/><rect x="160.13" y="22.70" width="1" height="3.20"/><rect x="160.13" y="347.50" width="1" height="3.20"/><rect x="172.62" y="22.70" width="1" height="3.20"/><rect x="172.62" y="347.50" width="1" height="3.20"/><rect x="185.11" y="22.70" width="1" height="3.20"/><rect x="185.11" y="347.50" width="1" height="3.20"/><rect x="197.60" y="22.70" width="1" height="6.00"/><rect x="197.60" y="344.70" width="1" height="6.00"/><rect x="210.09" y="22.70" width="1" height="3.20"/><rect x="210.09" y="347.50" width="1" height="3.20"/><rect x="222.58" y="22.70" width="1" height="3.20"/><rect x="222.58" y="347.50" width="1" height="3.20"/><rect x="235.07" y="22.70" width="1" height="3.20"/><rect x="235.07" y="347.50" width="1" height="3.20"/><rect x="247.56" y="22.70" width="1" height="3.20"/><rect x="247.56" y="347.50" width="1" height="3.20"/><rect x="260.05" y="22.70" width="1" height="6.00"/><rect x="260.05" y="344.70" width="1" height="6.00"/><rect x="272.54" y="22.70" width="1" height="3.20"/><rect x="272.54" y="347.50" width="1" height="3.20"/><rect x="285.03" y="22.70" width="1" height="3.20"/><rect x="285.03" y="347.50" width="1" height="3.20"/><rect x="297.52" y="22.70" width="1" height="3.20"/><rect x="297.52" y="347.50" width="1" height="3.20"/><rect x="310.01" y="22.70" width="1" height="3.20"/><rect x="310.01" y="347.50" width="1" height="3.20"/><rect x="322.50" y="22.70" width="1" height="6.00"/><rect x="322.50" y="344.70" width="1" height="6.00"/><rect x="334.99" y="22.70" width="1" height="3.20"/><rect x="334.99" y="347.50" width="1" height="3.20"/><rect x="347.48" y="22.70" width="1" height="3.20"/><rect x="347.48" y="347.50" width="1" height="3.20"/><rect x="359.97" y="22.70" width="1" height="3.20"/><rect x="359.97" y="347.50" width="1" height="3.20"/><rect x="372.46" y="22.70" width="1" height="3.20"/><rect x="372.46" y="347.50" width="1" height="3.20"/><rect x="384.95" y="22.70" width="1" height="6.00"/><rect x="384.95" y="344.70" width="1" height="6.00"/><rect x="397.44" y="22.70" width="1" height="3.20"/><rect x="397.44" y="347.50" width="1" height="3.20"/><rect x="409.93" y="22.70" width="1" height="3.20"/><rect x="409.93" y="347.50" width="1" height="3.20"/><rect x="422.42" y="22.70" width="1" height="3.20"/><rect x="422.42" y="347.50" width="1" height="3.20"/><rect x="434.91" y="22.70" width="1" height="3.20"/><rect x="434.91" y="347.50" width="1" height="3.20"/><rect x="447.40" y="22.70" width="1" height="6.00"/><rect x="447.40" y="344.70" width="1" height="6.00"/><rect x="459.89" y="22.70" width="1" height="3.20"/><rect x="459.89" y="347.50" width="1" height="3.20"/><rect x="472.38" y="22.70" width="1" height="3.20"/><rect x="472.38" y="347.50" width="1" height="3.20"/><rect x="484.87" y="22.70" width="1" height="3.20"/><rect x="484.87" y="347.50" width="1" height="3.20"/><rect x="497.36" y="22.70" width="1" height="3.20"/><rect x="497.36" y="347.50" width="1" height="3.20"/><rect x="509.85" y="22.70" width="1" height="6.00"/><rect x="509.85" y="344.70" width="1" height="6.00"/><rect x="522.34" y="22.70" width="1" height="3.20"/><rect x="522.34" y="347.50" width="1" height="3.20"/><rect x="534.83" y="22.70" width="1" height="3.20"/><rect x="534.83" y="347.50" width="1" height="3.20"/><rect x="547.32" y="22.70" width="1" height="3.20"/><rect x="547.32" y="347.50" width="1" height="3.20"/><rect x="559.81" y="22.70" width="1" height="3.20"/><rect x="559.81" y="347.50" width="1" height="3.20"/><rect x="572.30" y="22.70" width="1" height="6.00"/><rect x="572.30" y="344.70" width="1" height="6.00"/><rect x="584.79" y="22.70" width="1" height="3.20"/><rect x="584.79" y="347.50" width="1" height="3.20"/><rect x="597.28" y="22.70" width="1" height="3.20"/><rect x="597.28" y="347.50" width="1" height="3.20"/><rect x="609.77" y="22.70" width="1" height="3.20"/><rect x="609.77" y="347.50" width="1" height="3.20"/><rect x="622.26" y="22.70" width="1" height="3.20"/><rect x="622.26" y="347.50" width="1" height="3.20"/><rect x="10.75" y="28.76" width="3.40" height="1"/><rect x="631.85" y="28.76" width="3.40" height="1"/><rect x="10.75" y="35.32" width="3.40" height="1"/><rect x="631.85" y="35.32" width="3.40" height="1"/><rect x="10.75" y="41.88" width="3.40" height="1"/><rect x="631.85" y="41.88" width="3.40" height="1"/><rect x="10.75" y="48.44" width="3.40" height="1"/><rect x="631.85" y="48.44" width="3.40" height="1"/><rect x="10.75" y="55.00" width="6.50" height="1"/><rect x="628.75" y="55.00" width="6.50" height="1"/><rect x="10.75" y="61.56" width="3.40" height="1"/><rect x="631.85" y="61.56" width="3.40" height="1"/><rect x="10.75" y="68.12" width="3.40" height="1"/><rect x="631.85" y="68.12" width="3.40" height="1"/><rect x="10.75" y="74.68" width="3.40" height="1"/><rect x="631.85" y="74.68" width="3.40" height="1"/><rect x="10.75" y="81.24" width="3.40" height="1"/><rect x="631.85" y="81.24" width="3.40" height="1"/><rect x="10.75" y="87.80" width="6.50" height="1"/><rect x="628.75" y="87.80" width="6.50" height="1"/><rect x="10.75" y="94.36" width="3.40" height="1"/><rect x="631.85" y="94.36" width="3.40" height="1"/><rect x="10.75" y="100.92" width="3.40" height="1"/><rect x="631.85" y="100.92" width="3.40" height="1"/><rect x="10.75" y="107.48" width="3.40" height="1"/><rect x="631.85" y="107.48" width="3.40" height="1"/><rect x="10.75" y="114.04" width="3.40" height="1"/><rect x="631.85" y="114.04" width="3.40" height="1"/><rect x="10.75" y="120.60" width="6.50" height="1"/><rect x="628.75" y="120.60" width="6.50" height="1"/><rect x="10.75" y="127.16" width="3.40" height="1"/><rect x="631.85" y="127.16" width="3.40" height="1"/><rect x="10.75" y="133.72" width="3.40" height="1"/><rect x="631.85" y="133.72" width="3.40" height="1"/><rect x="10.75" y="140.28" width="3.40" height="1"/><rect x="631.85" y="140.28" width="3.40" height="1"/><rect x="10.75" y="146.84" width="3.40" height="1"/><rect x="631.85" y="146.84" width="3.40" height="1"/><rect x="10.75" y="153.40" width="6.50" height="1"/><rect x="628.75" y="153.40" width="6.50" height="1"/><rect x="10.75" y="159.96" width="3.40" height="1"/><rect x="631.85" y="159.96" width="3.40" height="1"/><rect x="10.75" y="166.52" width="3.40" height="1"/><rect x="631.85" y="166.52" width="3.40" height="1"/><rect x="10.75" y="173.08" width="3.40" height="1"/><rect x="631.85" y="173.08" width="3.40" height="1"/><rect x="10.75" y="179.64" width="3.40" height="1"/><rect x="631.85" y="179.64" width="3.40" height="1"/><rect x="10.75" y="186.20" width="6.50" height="1"/><rect x="628.75" y="186.20" width="6.50" height="1"/><rect x="10.75" y="192.76" width="3.40" height="1"/><rect x="631.85" y="192.76" width="3.40" height="1"/><rect x="10.75" y="199.32" width="3.40" height="1"/><rect x="631.85" y="199.32" width="3.40" height="1"/><rect x="10.75" y="205.88" width="3.40" height="1"/><rect x="631.85" y="205.88" width="3.40" height="1"/><rect x="10.75" y="212.44" width="3.40" height="1"/><rect x="631.85" y="212.44" width="3.40" height="1"/><rect x="10.75" y="219.00" width="6.50" height="1"/><rect x="628.75" y="219.00" width="6.50" height="1"/><rect x="10.75" y="225.56" width="3.40" height="1"/><rect x="631.85" y="225.56" width="3.40" height="1"/><rect x="10.75" y="232.12" width="3.40" height="1"/><rect x="631.85" y="232.12" width="3.40" height="1"/><rect x="10.75" y="238.68" width="3.40" height="1"/><rect x="631.85" y="238.68" width="3.40" height="1"/><rect x="10.75" y="245.24" width="3.40" height="1"/><rect x="631.85" y="245.24" width="3.40" height="1"/><rect x="10.75" y="251.80" width="6.50" height="1"/><rect x="628.75" y="251.80" width="6.50" height="1"/><rect x="10.75" y="258.36" width="3.40" height="1"/><rect x="631.85" y="258.36" width="3.40" height="1"/><rect x="10.75" y="264.92" width="3.40" height="1"/><rect x="631.85" y="264.92" width="3.40" height="1"/><rect x="10.75" y="271.48" width="3.40" height="1"/><rect x="631.85" y="271.48" width="3.40" height="1"/><rect x="10.75" y="278.04" width="3.40" height="1"/><rect x="631.85" y="278.04" width="3.40" height="1"/><rect x="10.75" y="284.60" width="6.50" height="1"/><rect x="628.75" y="284.60" width="6.50" height="1"/><rect x="10.75" y="291.16" width="3.40" height="1"/><rect x="631.85" y="291.16" width="3.40" height="1"/><rect x="10.75" y="297.72" width="3.40" height="1"/><rect x="631.85" y="297.72" width="3.40" height="1"/><rect x="10.75" y="304.28" width="3.40" height="1"/><rect x="631.85" y="304.28" width="3.40" height="1"/><rect x="10.75" y="310.84" width="3.40" height="1"/><rect x="631.85" y="310.84" width="3.40" height="1"/><rect x="10.75" y="317.40" width="6.50" height="1"/><rect x="628.75" y="317.40" width="6.50" height="1"/><rect x="10.75" y="323.96" width="3.40" height="1"/><rect x="631.85" y="323.96" width="3.40" height="1"/><rect x="10.75" y="330.52" width="3.40" height="1"/><rect x="631.85" y="330.52" width="3.40" height="1"/><rect x="10.75" y="337.08" width="3.40" height="1"/><rect x="631.85" y="337.08" width="3.40" height="1"/><rect x="10.75" y="343.64" width="3.40" height="1"/><rect x="631.85" y="343.64" width="3.40" height="1"/></g>
<rect x="322.50" y="22.70" width="1" height="328.00" fill="#5e5a4c"/><rect x="321.00" y="28.76" width="4.00" height="1" fill="#7a735f"/><rect x="321.00" y="35.32" width="4.00" height="1" fill="#7a735f"/><rect x="321.00" y="41.88" width="4.00" height="1" fill="#7a735f"/><rect x="321.00" y="48.44" width="4.00" height="1" fill="#7a735f"/><rect x="320.00" y="55.00" width="6.00" height="1" fill="#7a735f"/><rect x="321.00" y="61.56" width="4.00" height="1" fill="#7a735f"/><rect x="321.00" y="68.12" width="4.00" height="1" fill="#7a735f"/><rect x="321.00" y="74.68" width="4.00" height="1" fill="#7a735f"/><rect x="321.00" y="81.24" width="4.00" height="1" fill="#7a735f"/><rect x="320.00" y="87.80" width="6.00" height="1" fill="#7a735f"/><rect x="321.00" y="94.36" width="4.00" height="1" fill="#7a735f"/><rect x="321.00" y="100.92" width="4.00" height="1" fill="#7a735f"/><rect x="321.00" y="107.48" width="4.00" height="1" fill="#7a735f"/><rect x="321.00" y="114.04" width="4.00" height="1" fill="#7a735f"/><rect x="320.00" y="120.60" width="6.00" height="1" fill="#7a735f"/><rect x="321.00" y="127.16" width="4.00" height="1" fill="#7a735f"/><rect x="321.00" y="133.72" width="4.00" height="1" fill="#7a735f"/><rect x="321.00" y="140.28" width="4.00" height="1" fill="#7a735f"/><rect x="321.00" y="146.84" width="4.00" height="1" fill="#7a735f"/><rect x="320.00" y="153.40" width="6.00" height="1" fill="#7a735f"/><rect x="321.00" y="159.96" width="4.00" height="1" fill="#7a735f"/><rect x="321.00" y="166.52" width="4.00" height="1" fill="#7a735f"/><rect x="321.00" y="173.08" width="4.00" height="1" fill="#7a735f"/><rect x="321.00" y="179.64" width="4.00" height="1" fill="#7a735f"/><rect x="320.00" y="186.20" width="6.00" height="1" fill="#7a735f"/><rect x="321.00" y="192.76" width="4.00" height="1" fill="#7a735f"/><rect x="321.00" y="199.32" width="4.00" height="1" fill="#7a735f"/><rect x="321.00" y="205.88" width="4.00" height="1" fill="#7a735f"/><rect x="321.00" y="212.44" width="4.00" height="1" fill="#7a735f"/><rect x="320.00" y="219.00" width="6.00" height="1" fill="#7a735f"/><rect x="321.00" y="225.56" width="4.00" height="1" fill="#7a735f"/><rect x="321.00" y="232.12" width="4.00" height="1" fill="#7a735f"/><rect x="321.00" y="238.68" width="4.00" height="1" fill="#7a735f"/><rect x="321.00" y="245.24" width="4.00" height="1" fill="#7a735f"/><rect x="320.00" y="251.80" width="6.00" height="1" fill="#7a735f"/><rect x="321.00" y="258.36" width="4.00" height="1" fill="#7a735f"/><rect x="321.00" y="264.92" width="4.00" height="1" fill="#7a735f"/><rect x="321.00" y="271.48" width="4.00" height="1" fill="#7a735f"/><rect x="321.00" y="278.04" width="4.00" height="1" fill="#7a735f"/><rect x="320.00" y="284.60" width="6.00" height="1" fill="#7a735f"/><rect x="321.00" y="291.16" width="4.00" height="1" fill="#7a735f"/><rect x="321.00" y="297.72" width="4.00" height="1" fill="#7a735f"/><rect x="321.00" y="304.28" width="4.00" height="1" fill="#7a735f"/><rect x="321.00" y="310.84" width="4.00" height="1" fill="#7a735f"/><rect x="320.00" y="317.40" width="6.00" height="1" fill="#7a735f"/><rect x="321.00" y="323.96" width="4.00" height="1" fill="#7a735f"/><rect x="321.00" y="330.52" width="4.00" height="1" fill="#7a735f"/><rect x="321.00" y="337.08" width="4.00" height="1" fill="#7a735f"/><rect x="321.00" y="343.64" width="4.00" height="1" fill="#7a735f"/><rect x="10.75" y="186.10" width="624.50" height="1.2" fill="#857c68"/><rect x="22.74" y="185.20" width="1" height="3.00" fill="#948b74"/><rect x="35.23" y="185.20" width="1" height="3.00" fill="#948b74"/><rect x="47.72" y="185.20" width="1" height="3.00" fill="#948b74"/><rect x="60.21" y="185.20" width="1" height="3.00" fill="#948b74"/><rect x="72.70" y="184.20" width="1" height="5.00" fill="#948b74"/><rect x="85.19" y="185.20" width="1" height="3.00" fill="#948b74"/><rect x="97.68" y="185.20" width="1" height="3.00" fill="#948b74"/><rect x="110.17" y="185.20" width="1" height="3.00" fill="#948b74"/><rect x="122.66" y="185.20" width="1" height="3.00" fill="#948b74"/><rect x="135.15" y="184.20" width="1" height="5.00" fill="#948b74"/><rect x="147.64" y="185.20" width="1" height="3.00" fill="#948b74"/><rect x="160.13" y="185.20" width="1" height="3.00" fill="#948b74"/><rect x="172.62" y="185.20" width="1" height="3.00" fill="#948b74"/><rect x="185.11" y="185.20" width="1" height="3.00" fill="#948b74"/><rect x="197.60" y="184.20" width="1" height="5.00" fill="#948b74"/><rect x="210.09" y="185.20" width="1" height="3.00" fill="#948b74"/><rect x="222.58" y="185.20" width="1" height="3.00" fill="#948b74"/><rect x="235.07" y="185.20" width="1" height="3.00" fill="#948b74"/><rect x="247.56" y="185.20" width="1" height="3.00" fill="#948b74"/><rect x="260.05" y="184.20" width="1" height="5.00" fill="#948b74"/><rect x="272.54" y="185.20" width="1" height="3.00" fill="#948b74"/><rect x="285.03" y="185.20" width="1" height="3.00" fill="#948b74"/><rect x="297.52" y="185.20" width="1" height="3.00" fill="#948b74"/><rect x="310.01" y="185.20" width="1" height="3.00" fill="#948b74"/><rect x="322.50" y="184.20" width="1" height="5.00" fill="#948b74"/><rect x="334.99" y="185.20" width="1" height="3.00" fill="#948b74"/><rect x="347.48" y="185.20" width="1" height="3.00" fill="#948b74"/><rect x="359.97" y="185.20" width="1" height="3.00" fill="#948b74"/><rect x="372.46" y="185.20" width="1" height="3.00" fill="#948b74"/><rect x="384.95" y="184.20" width="1" height="5.00" fill="#948b74"/><rect x="397.44" y="185.20" width="1" height="3.00" fill="#948b74"/><rect x="409.93" y="185.20" width="1" height="3.00" fill="#948b74"/><rect x="422.42" y="185.20" width="1" height="3.00" fill="#948b74"/><rect x="434.91" y="185.20" width="1" height="3.00" fill="#948b74"/><rect x="447.40" y="184.20" width="1" height="5.00" fill="#948b74"/><rect x="459.89" y="185.20" width="1" height="3.00" fill="#948b74"/><rect x="472.38" y="185.20" width="1" height="3.00" fill="#948b74"/><rect x="484.87" y="185.20" width="1" height="3.00" fill="#948b74"/><rect x="497.36" y="185.20" width="1" height="3.00" fill="#948b74"/><rect x="509.85" y="184.20" width="1" height="5.00" fill="#948b74"/><rect x="522.34" y="185.20" width="1" height="3.00" fill="#948b74"/><rect x="534.83" y="185.20" width="1" height="3.00" fill="#948b74"/><rect x="547.32" y="185.20" width="1" height="3.00" fill="#948b74"/><rect x="559.81" y="185.20" width="1" height="3.00" fill="#948b74"/><rect x="572.30" y="184.20" width="1" height="5.00" fill="#948b74"/><rect x="584.79" y="185.20" width="1" height="3.00" fill="#948b74"/><rect x="597.28" y="185.20" width="1" height="3.00" fill="#948b74"/><rect x="609.77" y="185.20" width="1" height="3.00" fill="#948b74"/><rect x="622.26" y="185.20" width="1" height="3.00" fill="#948b74"/>
<path d="M10.50,72.50 C11.33,71.92 14.12,69.21 15.50,69.00 C16.88,68.79 17.58,70.04 18.75,71.25 C19.92,72.46 21.25,74.92 22.50,76.25 C23.75,77.58 25.00,78.62 26.25,79.25 C27.50,79.88 28.54,80.08 30.00,80.00 C31.46,79.92 33.54,79.08 35.00,78.75 C36.46,78.42 37.71,77.96 38.75,78.00 C39.79,78.04 40.29,77.92 41.25,79.00 C42.21,80.08 43.46,81.83 44.50,84.50 C45.54,87.17 46.38,91.17 47.50,95.00 C48.62,98.83 50.21,104.17 51.25,107.50 C52.29,110.83 52.71,111.67 53.75,115.00 C54.79,118.33 56.25,123.33 57.50,127.50 C58.75,131.67 59.38,135.83 61.25,140.00 C63.12,144.17 66.46,148.12 68.75,152.50 C71.04,156.88 72.71,160.62 75.00,166.25 C77.29,171.88 80.00,178.75 82.50,186.25 C85.00,193.75 87.50,204.38 90.00,211.25 C92.50,218.12 95.21,222.71 97.50,227.50 C99.79,232.29 101.88,236.04 103.75,240.00 C105.62,243.96 107.08,247.50 108.75,251.25 C110.42,255.00 112.08,259.46 113.75,262.50 C115.42,265.54 116.88,267.75 118.75,269.50 C120.62,271.25 122.92,271.75 125.00,273.00 C127.08,274.25 129.38,275.21 131.25,277.00 C133.12,278.79 134.58,281.46 136.25,283.75 C137.92,286.04 139.58,289.08 141.25,290.75 C142.92,292.42 144.58,293.29 146.25,293.75 C147.92,294.21 149.58,294.12 151.25,293.50 C152.92,292.88 154.79,291.12 156.25,290.00 C157.71,288.88 158.33,287.50 160.00,286.75 C161.67,286.00 164.17,286.00 166.25,285.50 C168.33,285.00 170.42,284.88 172.50,283.75 C174.58,282.62 176.67,281.88 178.75,278.75 C180.83,275.62 182.92,269.58 185.00,265.00 C187.08,260.42 189.25,255.42 191.25,251.25 C193.25,247.08 194.50,245.42 197.00,240.00 C199.50,234.58 203.67,225.42 206.25,218.75 C208.83,212.08 210.71,205.42 212.50,200.00 C214.29,194.58 215.33,191.67 217.00,186.25 C218.67,180.83 220.75,173.12 222.50,167.50 C224.25,161.88 225.83,157.08 227.50,152.50 C229.17,147.92 230.00,146.25 232.50,140.00 C235.00,133.75 239.79,121.67 242.50,115.00 C245.21,108.33 246.67,104.58 248.75,100.00 C250.83,95.42 252.92,90.83 255.00,87.50 C257.08,84.17 259.25,82.00 261.25,80.00 C263.25,78.00 265.12,76.17 267.00,75.50 C268.88,74.83 270.67,75.79 272.50,76.00 C274.33,76.21 276.12,75.88 278.00,76.75 C279.88,77.62 281.75,79.46 283.75,81.25 C285.75,83.04 287.92,84.38 290.00,87.50 C292.08,90.62 294.17,95.42 296.25,100.00 C298.33,104.58 300.62,110.00 302.50,115.00 C304.38,120.00 306.12,125.83 307.50,130.00 C308.88,134.17 309.50,136.25 310.75,140.00 C312.00,143.75 313.46,148.33 315.00,152.50 C316.54,156.67 318.33,161.25 320.00,165.00 C321.67,168.75 323.33,171.38 325.00,175.00 C326.67,178.62 328.33,182.58 330.00,186.75 C331.67,190.92 333.12,195.29 335.00,200.00 C336.88,204.71 338.96,210.21 341.25,215.00 C343.54,219.79 346.54,224.58 348.75,228.75 C350.96,232.92 352.62,236.04 354.50,240.00 C356.38,243.96 358.04,247.92 360.00,252.50 C361.96,257.08 364.17,263.12 366.25,267.50 C368.33,271.88 370.42,275.62 372.50,278.75 C374.58,281.88 376.46,284.79 378.75,286.25 C381.04,287.71 383.54,286.88 386.25,287.50 C388.96,288.12 392.08,289.04 395.00,290.00 C397.92,290.96 400.83,293.67 403.75,293.25 C406.67,292.83 409.38,289.50 412.50,287.50 C415.62,285.50 419.79,282.83 422.50,281.25 C425.21,279.67 426.88,279.88 428.75,278.00 C430.62,276.12 431.88,273.42 433.75,270.00 C435.62,266.58 438.12,261.46 440.00,257.50 C441.88,253.54 443.75,249.42 445.00,246.25 C446.25,243.08 445.73,243.29 447.50,238.50 C449.27,233.71 452.98,224.33 455.60,217.50 C458.22,210.67 461.13,202.92 463.20,197.50 C465.27,192.08 466.45,190.00 468.00,185.00 C469.55,180.00 470.92,173.54 472.50,167.50 C474.08,161.46 476.04,153.54 477.50,148.75 C478.96,143.96 479.77,142.97 481.25,138.75 C482.73,134.53 484.38,129.08 486.40,123.40 C488.42,117.73 490.53,110.82 493.40,104.70 C496.27,98.58 500.68,91.38 503.60,86.70 C506.52,82.02 508.68,79.12 510.90,76.60 C513.12,74.08 514.60,72.43 516.90,71.60 C519.20,70.77 522.48,71.30 524.70,71.60 C526.92,71.90 528.12,71.53 530.20,73.40 C532.28,75.27 535.00,80.07 537.20,82.80 C539.40,85.53 540.02,82.97 543.40,89.80 C546.78,96.62 554.11,115.38 557.50,123.75 C560.89,132.12 561.67,134.79 563.75,140.00 C565.83,145.21 567.92,149.79 570.00,155.00 C572.08,160.21 574.17,166.04 576.25,171.25 C578.33,176.46 580.42,180.62 582.50,186.25 C584.58,191.88 586.67,199.17 588.75,205.00 C590.83,210.83 592.79,215.58 595.00,221.25 C597.21,226.92 599.71,234.00 602.00,239.00 C604.29,244.00 606.38,247.33 608.75,251.25 C611.12,255.17 613.75,259.17 616.25,262.50 C618.75,265.83 621.46,268.12 623.75,271.25 C626.04,274.38 628.12,278.21 630.00,281.25 C631.88,284.29 634.17,288.12 635.00,289.50" fill="none" stroke="#00c0c8" stroke-width="1.15" stroke-linejoin="round"/>
<path d="M10.50,258.00 C11.88,253.75 16.33,240.08 18.75,232.50 C21.17,224.92 22.71,220.42 25.00,212.50 C27.29,204.58 30.00,193.75 32.50,185.00 C35.00,176.25 37.71,167.50 40.00,160.00 C42.29,152.50 43.96,147.50 46.25,140.00 C48.54,132.50 51.46,122.29 53.75,115.00 C56.04,107.71 57.92,102.29 60.00,96.25 C62.08,90.21 64.17,83.54 66.25,78.75 C68.33,73.96 70.62,70.83 72.50,67.50 C74.38,64.17 76.04,60.71 77.50,58.75 C78.96,56.79 79.79,56.50 81.25,55.75 C82.71,55.00 84.88,54.62 86.25,54.25 C87.62,53.88 88.46,53.38 89.50,53.50 C90.54,53.62 91.38,54.00 92.50,55.00 C93.62,56.00 94.79,57.83 96.25,59.50 C97.71,61.17 99.79,63.67 101.25,65.00 C102.71,66.33 103.54,66.17 105.00,67.50 C106.46,68.83 108.33,70.92 110.00,73.00 C111.67,75.08 113.54,77.17 115.00,80.00 C116.46,82.83 117.50,85.83 118.75,90.00 C120.00,94.17 121.04,99.58 122.50,105.00 C123.96,110.42 125.83,116.67 127.50,122.50 C129.17,128.33 131.04,135.62 132.50,140.00 C133.96,144.38 134.38,145.42 136.25,148.75 C138.12,152.08 141.46,155.83 143.75,160.00 C146.04,164.17 148.12,168.75 150.00,173.75 C151.88,178.75 153.75,185.62 155.00,190.00 C156.25,194.38 156.62,196.77 157.50,200.00 C158.38,203.23 159.37,206.12 160.30,209.40 C161.23,212.68 162.08,216.58 163.10,219.70 C164.12,222.82 165.22,225.45 166.40,228.10 C167.58,230.75 168.48,232.82 170.20,235.60 C171.92,238.38 175.07,242.19 176.70,244.80 C178.33,247.41 178.62,247.88 180.00,251.25 C181.38,254.62 183.33,259.79 185.00,265.00 C186.67,270.21 188.33,277.92 190.00,282.50 C191.67,287.08 193.12,289.92 195.00,292.50 C196.88,295.08 199.17,296.42 201.25,298.00 C203.33,299.58 205.62,300.42 207.50,302.00 C209.38,303.58 210.83,305.83 212.50,307.50 C214.17,309.17 215.83,311.12 217.50,312.00 C219.17,312.88 220.83,312.88 222.50,312.75 C224.17,312.62 225.83,312.33 227.50,311.25 C229.17,310.17 230.83,307.92 232.50,306.25 C234.17,304.58 235.83,302.50 237.50,301.25 C239.17,300.00 240.83,300.21 242.50,298.75 C244.17,297.29 245.83,295.21 247.50,292.50 C249.17,289.79 251.04,286.04 252.50,282.50 C253.96,278.96 255.00,275.25 256.25,271.25 C257.50,267.25 258.54,263.71 260.00,258.50 C261.46,253.29 263.33,245.58 265.00,240.00 C266.67,234.42 267.92,230.42 270.00,225.00 C272.08,219.58 275.42,212.71 277.50,207.50 C279.58,202.29 281.25,197.71 282.50,193.75 C283.75,189.79 283.75,188.96 285.00,183.75 C286.25,178.54 288.33,169.79 290.00,162.50 C291.67,155.21 293.54,146.25 295.00,140.00 C296.46,133.75 297.50,128.96 298.75,125.00 C300.00,121.04 301.04,119.38 302.50,116.25 C303.96,113.12 305.83,109.38 307.50,106.25 C309.17,103.12 311.04,100.62 312.50,97.50 C313.96,94.38 315.00,90.50 316.25,87.50 C317.50,84.50 318.54,83.04 320.00,79.50 C321.46,75.96 323.33,69.83 325.00,66.25 C326.67,62.67 328.54,59.71 330.00,58.00 C331.46,56.29 331.88,56.38 333.75,56.00 C335.62,55.62 339.17,55.17 341.25,55.75 C343.33,56.33 344.17,58.17 346.25,59.50 C348.33,60.83 351.46,61.38 353.75,63.75 C356.04,66.12 357.92,70.00 360.00,73.75 C362.08,77.50 364.17,81.67 366.25,86.25 C368.33,90.83 370.42,96.25 372.50,101.25 C374.58,106.25 376.88,111.25 378.75,116.25 C380.62,121.25 382.54,127.29 383.75,131.25 C384.96,135.21 384.96,136.25 386.00,140.00 C387.04,143.75 388.50,148.54 390.00,153.75 C391.50,158.96 393.54,166.04 395.00,171.25 C396.46,176.46 397.29,180.62 398.75,185.00 C400.21,189.38 401.88,193.33 403.75,197.50 C405.62,201.67 407.92,205.62 410.00,210.00 C412.08,214.38 414.17,218.67 416.25,223.75 C418.33,228.83 420.62,235.50 422.50,240.50 C424.38,245.50 425.62,249.04 427.50,253.75 C429.38,258.46 431.46,264.38 433.75,268.75 C436.04,273.12 438.75,276.67 441.25,280.00 C443.75,283.33 446.25,285.42 448.75,288.75 C451.25,292.08 453.96,296.88 456.25,300.00 C458.54,303.12 460.62,305.54 462.50,307.50 C464.38,309.46 465.83,310.92 467.50,311.75 C469.17,312.58 470.83,312.67 472.50,312.50 C474.17,312.33 476.25,311.46 477.50,310.75 C478.75,310.04 478.54,310.67 480.00,308.25 C481.46,305.83 483.96,299.71 486.25,296.25 C488.54,292.79 491.25,290.00 493.75,287.50 C496.25,285.00 499.17,283.54 501.25,281.25 C503.33,278.96 504.58,277.50 506.25,273.75 C507.92,270.00 509.46,264.38 511.25,258.75 C513.04,253.12 514.71,248.12 517.00,240.00 C519.29,231.88 522.21,218.75 525.00,210.00 C527.79,201.25 531.25,195.00 533.75,187.50 C536.25,180.00 538.21,171.25 540.00,165.00 C541.79,158.75 543.21,154.17 544.50,150.00 C545.79,145.83 546.42,144.38 547.75,140.00 C549.08,135.62 550.46,131.25 552.50,123.75 C554.54,116.25 557.42,103.96 560.00,95.00 C562.58,86.04 565.33,76.17 568.00,70.00 C570.67,63.83 573.33,60.50 576.00,58.00 C578.67,55.50 581.33,55.33 584.00,55.00 C586.67,54.67 589.33,54.83 592.00,56.00 C594.67,57.17 597.33,59.33 600.00,62.00 C602.67,64.67 605.33,68.00 608.00,72.00 C610.67,76.00 613.58,81.12 616.00,86.00 C618.42,90.88 620.79,96.42 622.50,101.25 C624.21,106.08 624.79,110.21 626.25,115.00 C627.71,119.79 629.79,126.04 631.25,130.00 C632.71,133.96 634.38,137.29 635.00,138.75" fill="none" stroke="#d800d8" stroke-width="1.15" stroke-linejoin="round"/>
<line x1="283.5" y1="22.70" x2="283.5" y2="350.70" stroke="#b000b8" stroke-width="1.3"/>
<line x1="467.5" y1="22.70" x2="467.5" y2="350.70" stroke="#d800d8" stroke-width="1.1" stroke-dasharray="1.6 1.54"/>
<polygon points="469.2,22.5 475.2,22.5 472.2,28.8" fill="#f0a010"/>
<circle cx="277.5" cy="55.5" r="3.7" fill="#f0a400"/>
<text x="277.5" y="57.5" font-family="Liberation Sans, sans-serif" font-size="7.6" font-weight="bold" fill="#241400" text-anchor="middle">a</text>
<circle cx="460.9" cy="55.5" r="3.7" fill="#f0a400"/>
<text x="460.9" y="58.1" font-family="Liberation Sans, sans-serif" font-size="7.6" font-weight="bold" fill="#241400" text-anchor="middle">b</text>
<rect x="8" y="19" width="629.2" height="2" fill="#141a6c"/>
<rect x="6" y="20" width="2" height="333" fill="#5672c0"/>
<path d="M8,20.8H637.2V352.5H8Z M10.5,22.7V350.3H635V22.7Z" fill="#d08408" fill-rule="evenodd"/>
<rect x="628" y="166.3" width="9" height="1.4" fill="#008c94"/>
<polygon points="622.5,167 628.3,164 628.3,170" fill="#00e8f0"/>
<polygon points="12,187.9 14.3,187.9 14.3,185.6 19.4,188.5 14.3,191.4 14.3,189.1 12,189.1" fill="#f020f0"/>
<circle cx="6.75" cy="188.5" r="6" fill="#f0a000"/>
<circle cx="6.75" cy="188.5" r="5" fill="#f000f0"/>
<text x="6.75" y="191.6" font-family="Liberation Sans, sans-serif" font-size="8.5" font-weight="bold" fill="#500050" text-anchor="middle">3</text>
</svg>


<!-- cursor readout popup -->
<div class="abs" style="left:543.2px;top:38.8px;width:79.4px;height:85px;box-sizing:border-box;border-radius:4px;border:1px solid #3c4468;border-top-color:#6a7290;background:#1a2046;"></div>
<div class="b" style="left:560px;top:45.6px;font-size:7.7px;color:#fff;">Curs1 X Pos</div>
<div class="abs" style="left:608px;top:48.6px;width:9.4px;height:9.4px;border-radius:4.7px;background:#f4b600;font-size:9.2px;line-height:7.8px;font-weight:bold;color:#101010;text-align:center;">a</div>
<div class="abs" style="left:551.2px;top:60.8px;width:61.4px;height:1px;background:#8c92a8;"></div>
<div class="b" style="left:543.2px;width:79.4px;text-align:center;top:65.6px;font-size:8.3px;color:#fff;">-302.2ps</div>
<div class="b" style="left:560px;top:87.7px;font-size:7.7px;color:#fff;">Curs2 X Pos</div>
<div class="abs" style="left:608px;top:88.4px;width:9.4px;height:9.4px;border-radius:4.7px;background:#f4b600;font-size:9.2px;line-height:9px;font-weight:bold;color:#101010;text-align:center;">b</div>
<div class="abs" style="left:551.2px;top:100.8px;width:61.4px;height:1px;background:#8c92a8;"></div>
<div class="b" style="left:543.2px;width:79.4px;text-align:center;top:107.2px;font-size:8.3px;color:#fff;">-8.2ps</div>

<!-- menu bar -->
<div id="menubar" class="abs">
 <div class="abs topl"></div><div class="abs topr"></div>
 <div class="mi" style="left:0;width:21.25px">File</div>
 <div class="mi" style="left:21.25px;width:21.75px">Edit</div>
 <div class="mi" style="left:43px;width:33.25px">Vertical</div>
 <div class="mi" style="left:76.25px;width:40px">Horiz/Acq</div>
 <div class="mi" style="left:116.25px;width:21.75px">Trig</div>
 <div class="mi" style="left:138px;width:32.5px">Display</div>
 <div class="mi" style="left:170.5px;width:34.5px">Cursors</div>
 <div class="mi" style="left:205px;width:37px">Measure</div>
 <div class="mi" style="left:242px;width:26px">Mask</div>
 <div class="mi" style="left:268px;width:25px">Math</div>
 <div class="mi" style="left:293px;width:38.75px">MyScope</div>
 <div class="mi" style="left:331.75px;width:35px">Analyze</div>
 <div class="mi" style="left:366.75px;width:31.25px">Utilities</div>
 <div class="mi" style="left:398px;width:24px">Help</div>
 <div class="msep" style="left:20.75px"></div><div class="msep" style="left:42.5px"></div>
 <div class="msep" style="left:75.75px"></div><div class="msep" style="left:115.75px"></div>
 <div class="msep" style="left:137.5px"></div><div class="msep" style="left:170px"></div>
 <div class="msep" style="left:204.5px"></div><div class="msep" style="left:241.5px"></div>
 <div class="msep" style="left:267.5px"></div><div class="msep" style="left:292.5px"></div>
 <div class="msep" style="left:331.25px"></div><div class="msep" style="left:366.25px"></div>
 <div class="msep" style="left:397.5px"></div><div class="msep" style="left:421.5px"></div>
 <div class="abs" style="left:424px;top:2.5px;width:15.4px;height:15.6px;border-radius:1.5px;background:linear-gradient(#bcdcff,#7ab2f2 45%,#3c6cbc);"></div>
 <div class="abs" style="left:429.2px;top:8.6px;width:0;height:0;border-left:2.4px solid transparent;border-right:2.4px solid transparent;border-top:4.4px solid #0a0a60;"></div>
 <div class="abs" style="left:440px;top:0;width:1px;height:20.5px;background:#7a86be;"></div>
 <div class="abs" style="left:506px;top:5.5px;font-size:7.6px;line-height:9px;color:#1e2a7c;letter-spacing:0.1px;">DPO72004B</div>
 <div class="abs" style="left:560.4px;top:4.2px;font-size:9.2px;line-height:11px;font-weight:bold;color:#fff;text-shadow:0.9px 0.9px 0 #8a8a8a;">Tek</div>
 <div class="msep" style="left:582px;top:0;height:20px"></div><div class="msep" style="left:615.2px;top:0;height:20px"></div>
 <div class="abs" style="left:591px;top:2.7px;width:15.4px;height:14.8px;border-radius:1.5px;background:linear-gradient(#66b6ff,#3a8cf0 45%,#1c58b8);"></div>
 <div class="abs" style="left:594.8px;top:11.4px;width:7.6px;height:2px;background:#fff;"></div>
 <div class="abs" style="left:616.9px;top:2.7px;width:15.4px;height:14.8px;border-radius:1.5px;background:linear-gradient(#ff6a44,#ee2a08 45%,#b01000);"></div>
 <svg class="abs" style="left:616.9px;top:2.7px" width="15.4" height="14.8" viewBox="0 0 15.4 14.8"><path d="M4.7,4.2 L10.3,11.2 M10.3,4.2 L4.7,11.2" stroke="#fff" stroke-width="1.25" fill="none"/></svg>
</div>

<!-- left border highlight -->
<div class="abs" style="left:0;top:19.8px;width:1px;height:461px;background:#8797cb;"></div>
<div class="abs" style="left:8.3px;top:352.5px;width:629.7px;height:66.3px;background:#5a78c8;"></div>

<!-- status panel -->
<div class="abs" style="left:10.3px;top:355.7px;width:625.7px;height:61.3px;background:#000;"></div>

<div class="box" style="left:13px;top:357.5px;width:175.8px;height:29.2px;"></div>
<div class="badge cy" style="left:18.6px;top:362px;width:20.8px;height:8.6px;line-height:7.6px;">C2</div>
<div class="badge mg" style="left:18.6px;top:375.4px;width:20.8px;height:8.6px;line-height:7.6px;">C3</div>
<div class="b" style="left:42.2px;top:362.2px;">30.0mV/div</div>
<div class="b" style="left:42.2px;top:375.2px;">40.0mV/div</div>
<div class="b" style="left:114.2px;top:362.2px;">50&#937;</div>
<div class="b" style="left:114.2px;top:375.2px;">50&#937;</div>
<div class="b" style="left:134.8px;top:362.2px;"><span style="font-size:5.4px;position:relative;top:-2.2px;">B</span><span style="font-size:6.6px;position:relative;top:1.6px;margin-left:-0.6px;">W</span>:20.0G</div>
<div class="b" style="left:134.8px;top:375.2px;"><span style="font-size:5.4px;position:relative;top:-2.2px;">B</span><span style="font-size:6.6px;position:relative;top:1.6px;margin-left:-0.6px;">W</span>:20.0G</div>
<div class="abs" style="left:141.2px;top:362.6px;width:0.8px;height:2px;background:#ddd;transform:rotate(20deg);"></div>
<div class="abs" style="left:141.2px;top:375.6px;width:0.8px;height:2px;background:#ddd;transform:rotate(20deg);"></div>

<div class="box" style="left:191.3px;top:357.5px;width:85.5px;height:58.2px;"></div>
<div class="abs" style="left:219.8px;top:361px;width:54px;height:54.2px;box-sizing:border-box;border:1px solid #8a8a8a;"></div>
<div class="abs" style="left:219.8px;top:374.2px;width:54px;height:1px;background:#8a8a8a;"></div>
<div class="abs" style="left:219.8px;top:387.6px;width:54px;height:1px;background:#8a8a8a;"></div>
<div class="abs" style="left:219.8px;top:401px;width:54px;height:1px;background:#8a8a8a;"></div>
<div class="badge mg" style="left:196.2px;top:363.3px;width:22.6px;height:8.6px;line-height:7.2px;font-size:6px;color:#48004a;">t1</div>
<div class="badge mg" style="left:196.2px;top:376.7px;width:22.6px;height:8.6px;line-height:7.2px;font-size:6px;color:#48004a;">t2</div>
<div class="badge mg" style="left:196.2px;top:390.1px;width:22.6px;height:8.6px;line-height:7.2px;font-size:6px;color:#48004a;">&#916;t</div>
<div class="badge mg" style="left:196.2px;top:403.5px;width:22.6px;height:8.6px;line-height:7.2px;font-size:6px;color:#48004a;">1/&#916;t</div>
<div class="b" style="left:222.2px;top:363px;transform:translateY(0.5px);">-302.2ps</div>
<div class="b" style="left:222.2px;top:376px;transform:translateY(0.5px);">-8.2ps</div>
<div class="b" style="left:222.2px;top:389px;transform:translateY(0.6px);">294ps</div>
<div class="b" style="left:222.2px;top:402px;transform:translateY(0.6px);">3.401GHz</div>

<div class="box" style="left:369.2px;top:357.5px;width:116px;height:15.3px;"></div>
<div class="abs" style="left:373.4px;top:362px;width:9.6px;height:9.4px;box-sizing:border-box;background:linear-gradient(135deg,#f4f4f4,#c8c8c8);border:1px solid #e09020;font-size:6.8px;line-height:7.8px;font-weight:normal;color:#202020;text-align:center;">A'</div>
<div class="badge cy" style="left:384.6px;top:362px;width:20.6px;height:9px;line-height:7.8px;">C2</div>
<svg class="abs" style="left:405px;top:361px" width="12" height="11" viewBox="0 0 12 11"><path d="M1.6,9.2 H3.8 L7.4,1.9 H10.2" stroke="#f4f4f4" stroke-width="1.5" fill="none"/></svg>
<div class="b" style="left:417.7px;top:361.8px;">19.8mV</div>

<div class="box" style="left:488.2px;top:357.5px;width:144.4px;height:58.2px;"></div>
<div class="b" style="left:493.7px;top:361.4px;">100ps/div</div>
<div class="b" style="left:534.4px;top:361.4px;">50.0GS/s</div>
<div class="b" style="left:571.7px;top:361.4px;">IT</div>
<div class="b" style="left:587.4px;top:361.4px;">200fs/pt</div>
<div class="b" style="left:493.7px;top:374.6px;color:#f0f000;">Preview</div>
<div class="b" style="left:493.7px;top:387.7px;">0 acqs</div>
<div class="b" style="left:580.7px;top:387.7px;">RL:5.0k</div>
<div class="b" style="left:493.7px;top:400.9px;">Auto</div>
<div class="b" style="left:520px;top:400.9px;">September 26, 2023</div>
<div class="b" style="left:597.5px;top:400.9px;color:#f09000;">05:42:23</div>

<!-- cursor controls panel -->
<div class="abs" style="left:8px;top:424px;width:629.5px;height:49.8px;box-sizing:border-box;border:1px solid #c6cdea;background:#4a62b0;"></div>
<div class="abs" style="left:18.7px;top:426.8px;width:600px;height:45.8px;border-radius:3.5px;background:linear-gradient(to right,#9cb6e6,#8ea6dc 40%,#6a84cc);"></div>
<div class="abs" style="left:10.3px;top:427.3px;width:1.6px;height:1.6px;background:#34447c;"></div>
<div class="abs" style="left:13.3px;top:427.3px;width:1.6px;height:1.6px;background:#34447c;"></div>
<div class="abs" style="left:10.3px;top:430.3px;width:1.6px;height:1.6px;background:#34447c;"></div>
<div class="abs" style="left:19px;top:426.8px;width:83.8px;height:13.4px;box-sizing:border-box;background:#b6c8ee;border-right:1px solid #dfe6f8;border-bottom:1px solid #dfe6f8;border-radius:3px 0 0 0;"></div>
<div class="abs" style="left:24.2px;top:429.4px;font-size:9.3px;line-height:11px;font-weight:bold;color:#10108c;white-space:nowrap;">Cursor Controls</div>

<div class="lbl" style="left:153.6px;top:431.8px;font-size:8.2px;">Source</div>
<div class="lbl" style="left:102.6px;top:444.3px;font-size:8.2px;">Cursor 1</div>
<div class="lbl" style="left:197.6px;top:444.3px;font-size:8.2px;">Cursor 2</div>
<div class="dd" style="left:87.5px;top:453.6px;width:65px;"><span class="t">Ch 3</span><span class="btn"></span></div>
<div class="dd" style="left:182.2px;top:453.6px;width:65.3px;"><span class="t">Ch 3</span><span class="btn"></span></div>
<div class="vsep" style="left:257.2px;"></div>
<div class="vsep" style="left:483.8px;"></div>
<div class="vsep" style="left:554.1px;"></div>

<div class="lbl" style="left:358px;top:431.5px;font-size:7.9px;height:7px;overflow:hidden;">Cursor Type</div>
<div class="lbl" style="left:285px;top:443px;word-spacing:-0.8px;">H Bars</div>
<div class="lbl" style="left:334.9px;top:443px;word-spacing:-0.8px;">V Bars</div>
<div class="lbl" style="left:378.4px;top:443px;">Waveform</div>
<div class="lbl" style="left:433.7px;top:443px;">Screen</div>

<div class="pill" style="left:279.7px;top:453.1px;width:33.9px;height:16.7px;"></div>
<svg class="abs" style="left:279.7px;top:453.1px" width="34.1" height="16.7" viewBox="0 0 34.1 16.7"><path d="M6.6,4.1 H26.9 M6.6,11.6 H26.9" stroke="#18e028" stroke-width="1.4" fill="none"/><path d="M11.3,10.6 C13.4,10.4 13.4,3.8 15.7,3.8 C18.2,3.8 18,9.8 20,11.9 C21,13.4 22.4,13.6 23.8,11.9 C24.6,11.4 25,11.4 25.9,11.4" stroke="#1c2484" stroke-width="0.9" fill="none"/></svg>

<div class="pill" style="left:329.9px;top:453.1px;width:33.9px;height:16.7px;border-color:#3c2404;background:linear-gradient(#dc7c00,#f89812 45%,#ffc458);box-shadow:0 0 1px 0.6px #a8c4f0;"></div>
<svg class="abs" style="left:329.9px;top:453.1px" width="33.9" height="16.7" viewBox="0 0 33.9 16.7"><path d="M11.7,3.2 V14.1 M22.7,3.2 V14.1" stroke="#28d028" stroke-width="1.4" fill="none"/><path d="M7.7,11.6 H11.1 C13.2,11.4 13,5 15.1,5 C17.4,5 17.6,11 19,12.4 C20,13.4 21.2,13 22.4,11.6 H27.1" stroke="#2c2478" stroke-width="0.9" fill="none"/></svg>

<div class="pill" style="left:379.8px;top:453.1px;width:33.8px;height:16.7px;"></div>
<svg class="abs" style="left:379.8px;top:453.1px" width="34.1" height="16.7" viewBox="0 0 34.1 16.7"><path d="M9,7.2 H14.3 V3.2 H19.6 V7.2 H24.6 M9,9.1 H19.6 M21.2,13.3 H24.6" stroke="#1c2484" stroke-width="0.9" fill="none"/><path d="M19.4,8.7 L22.7,12.9 M12.2,4.1 L14.6,6.9" stroke="#20c848" stroke-width="1.1" fill="none"/></svg>

<div class="pill" style="left:429.7px;top:453.1px;width:34.1px;height:16.7px;"></div>
<svg class="abs" style="left:429.7px;top:453.1px" width="34.1" height="16.7" viewBox="0 0 34.1 16.7"><rect x="10.9" y="3.3" width="12.2" height="10.2" fill="#a0a8f4" stroke="#28303c" stroke-width="0.9"/><path d="M15.1,3.8 V13 M20.7,3.8 V13 M11.4,6 H22.6 M11.4,11.3 H22.6" stroke="#20d830" stroke-width="1.3" fill="none"/></svg>

<div class="lbl" style="left:494.5px;top:431.2px;font-size:7.4px;">Move Cursors</div>
<div class="lbl" style="left:502.4px;top:440px;font-size:7.4px;">to Center</div>
<div class="pill" style="left:502px;top:450.1px;width:34.7px;height:16.5px;"></div>

<div class="abs" style="left:569.1px;top:442.6px;width:34px;height:16.2px;box-sizing:border-box;border-radius:8.2px;border:0.8px solid #087884;background:linear-gradient(#4ce0ec,#10b4c4 50%,#0090a0);"></div>
<div class="lbl" style="left:576px;top:446.3px;font-size:7.8px;color:#0a1414;">Setup</div>

<div class="abs" style="left:621.1px;top:427.9px;width:14px;height:14px;box-sizing:border-box;border-radius:7px;border:1px solid #8088a8;background:radial-gradient(circle at 40% 35%,#ffffff 45%,#c4c8dc 80%,#9098b8);"></div>
<div class="abs" style="left:621.1px;top:427.9px;width:14px;height:14px;font-size:7.6px;line-height:14.4px;font-weight:bold;color:#1a1a9c;text-align:center;">X</div>
<svg class="abs" style="left:621px;top:446px" width="16" height="26" viewBox="0 0 16 26"><path d="M10.8,3.4 L4.6,7.6 L10.8,11.8 Z M4.8,14.4 L11,18.6 L4.8,22.8 Z" stroke="#7e90cc" stroke-width="0.8" fill="none"/></svg>
</div>
</body>
</html>
